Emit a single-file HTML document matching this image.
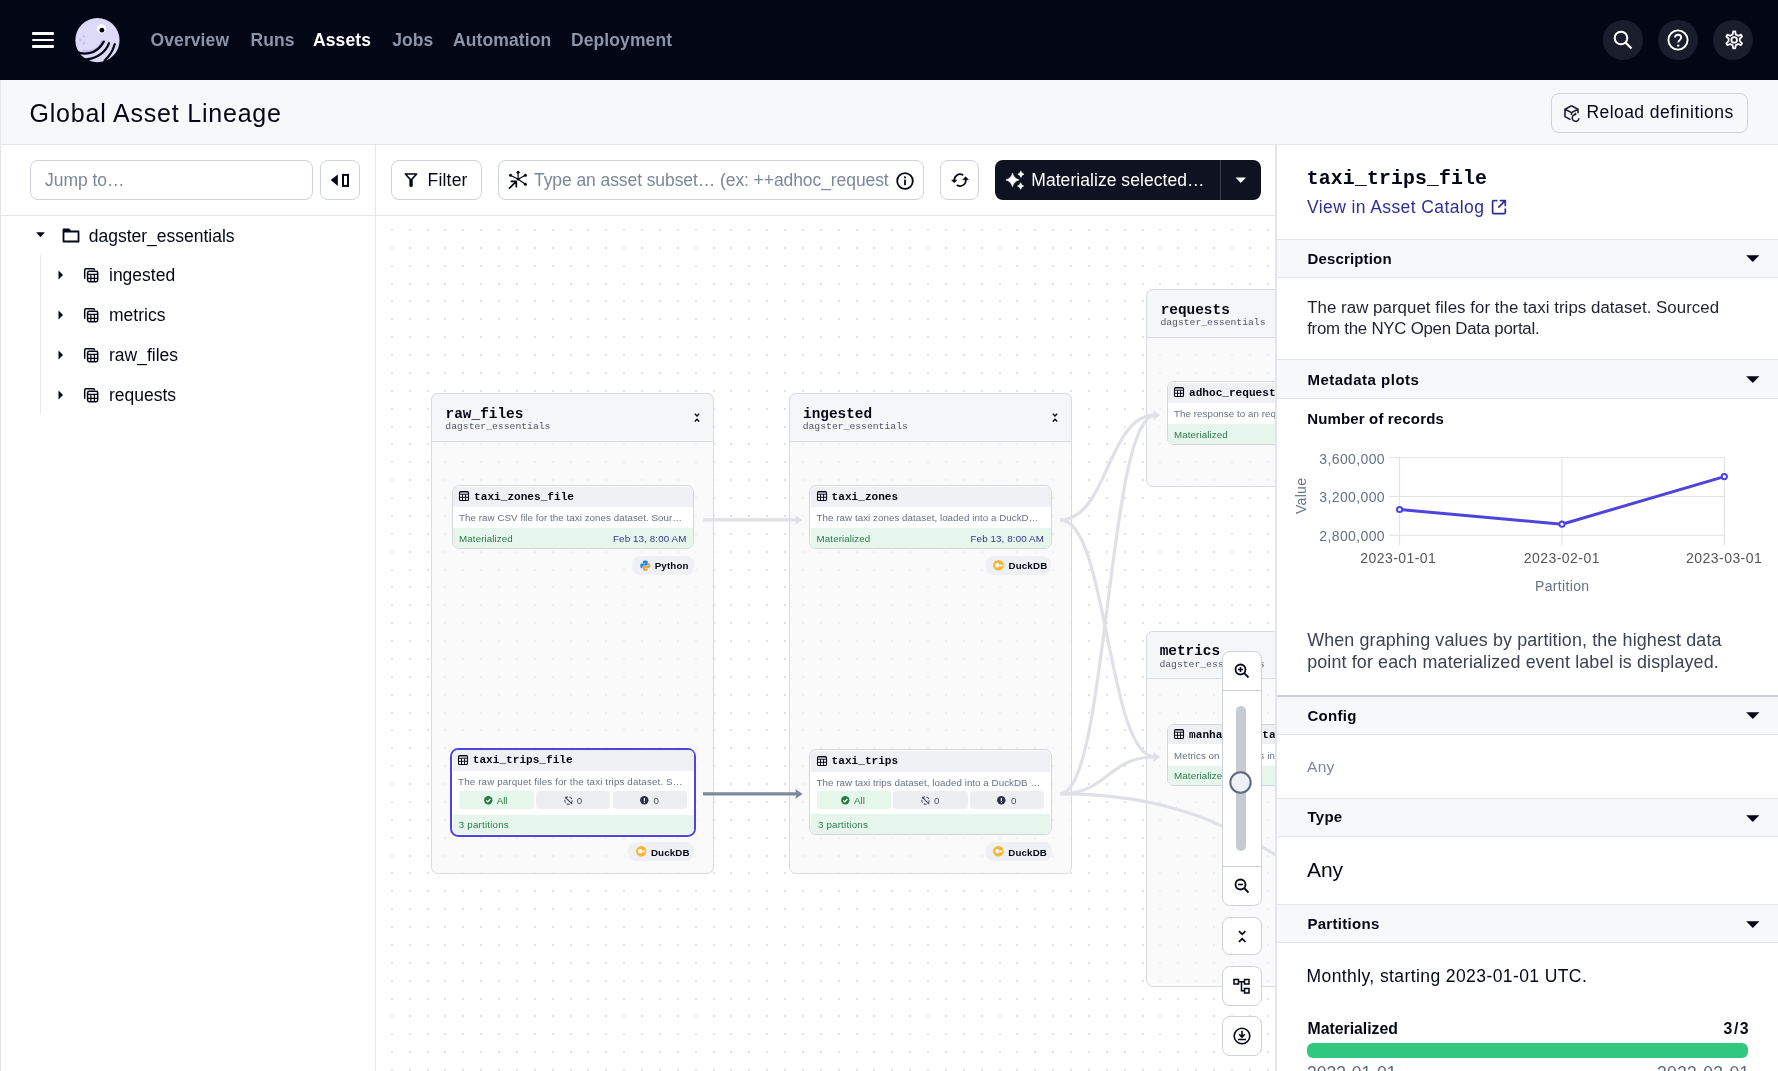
<!DOCTYPE html><html><head><meta charset="utf-8"><style>
*{box-sizing:border-box;margin:0;padding:0}
html,body{width:1778px;height:1071px;overflow:hidden;background:#fff;font-family:'Liberation Sans',sans-serif;color:#030615}
.a{position:absolute}
.t{position:absolute;white-space:nowrap;line-height:1}
svg{overflow:visible}
</style></head><body>
<div style="position:absolute;left:0;top:0;width:1778px;height:1071px;overflow:hidden;will-change:transform;background:#fff">
<div class="a" style="left:0px;top:0px;width:1778.00px;height:80.00px;background:#030615"></div>
<div class="a" style="left:31.8px;top:32.2px;width:22.60px;height:2.60px;background:#fff;border-radius:1px"></div>
<div class="a" style="left:31.8px;top:38.7px;width:22.60px;height:2.60px;background:#fff;border-radius:1px"></div>
<div class="a" style="left:31.8px;top:45.2px;width:22.60px;height:2.60px;background:#fff;border-radius:1px"></div>
<svg class="a" style="left:0px;top:0px;" width="130" height="80" viewBox="0 0 130 80">
<circle cx="97.45" cy="40.2" r="22.1" fill="#DCDAF8"/>
<path d="M84 51.5 C 92 52.5, 99 50, 102 42" stroke="#C5C0F2" stroke-width="3.2" fill="none" stroke-linecap="round"/>
<path d="M76 51.2 C 82 54.8, 96 56, 103.8 41.6" stroke="#030615" stroke-width="2.3" fill="none" stroke-linecap="round"/>
<path d="M87.5 59.2 C 97 58.3, 106 52, 109 43.2" stroke="#030615" stroke-width="2.2" fill="none" stroke-linecap="round"/>
<path d="M104.6 60.5 C 110 56, 113 50, 114.8 44.2" stroke="#030615" stroke-width="2.2" fill="none" stroke-linecap="round"/>
<path d="M70 53 L78.5 56 C 81 57.5, 84 58.3, 89 58.6 L 90.5 62.5 L 70 64 Z" fill="#030615"/>
<path d="M93 64 L 104.5 62 L 108 60 L 108 66 Z" fill="#030615"/>
<circle cx="101.4" cy="28.8" r="4.6" fill="#fff"/>
<circle cx="101.9" cy="30.2" r="2.4" fill="#030615"/>
<circle cx="83.9" cy="36.3" r="1.4" fill="#C5C0F2"/><circle cx="80.5" cy="40" r="1.4" fill="#C5C0F2"/><circle cx="83.9" cy="43.4" r="1.4" fill="#C5C0F2"/>
</svg>
<div class="t" style="left:150.50px;top:31.62px;font-size:17.5px;font-weight:700;color:#8D95A8;font-family:'Liberation Sans',sans-serif;letter-spacing:0.1px;">Overview</div>
<div class="t" style="left:250.50px;top:31.62px;font-size:17.5px;font-weight:700;color:#8D95A8;font-family:'Liberation Sans',sans-serif;letter-spacing:0.1px;">Runs</div>
<div class="t" style="left:313.00px;top:31.62px;font-size:17.5px;font-weight:700;color:#fff;font-family:'Liberation Sans',sans-serif;letter-spacing:0.1px;">Assets</div>
<div class="t" style="left:392.20px;top:31.62px;font-size:17.5px;font-weight:700;color:#8D95A8;font-family:'Liberation Sans',sans-serif;letter-spacing:0.1px;">Jobs</div>
<div class="t" style="left:453.00px;top:31.62px;font-size:17.5px;font-weight:700;color:#8D95A8;font-family:'Liberation Sans',sans-serif;letter-spacing:0.1px;">Automation</div>
<div class="t" style="left:571.00px;top:31.62px;font-size:17.5px;font-weight:700;color:#8D95A8;font-family:'Liberation Sans',sans-serif;letter-spacing:0.1px;">Deployment</div>
<div class="a" style="left:1603px;top:20px;width:40.00px;height:40.00px;background:#191D2C;border-radius:50%"></div>
<div class="a" style="left:1658px;top:20px;width:40.00px;height:40.00px;background:#191D2C;border-radius:50%"></div>
<div class="a" style="left:1713px;top:20px;width:40.00px;height:40.00px;background:#191D2C;border-radius:50%"></div>
<svg class="a" style="left:1610px;top:27px;" width="26" height="26" viewBox="0 0 26 26"><circle cx="11" cy="11" r="6.3" stroke="#fff" stroke-width="2" fill="none"/><path d="M15.5 15.5 L21.5 21.5" stroke="#fff" stroke-width="2.2"/></svg>
<svg class="a" style="left:1665px;top:27px;" width="26" height="26" viewBox="0 0 26 26"><circle cx="13" cy="13" r="9.6" stroke="#fff" stroke-width="1.9" fill="none"/><path d="M10 10.6 C10 6.8, 16.2 6.8, 16.2 10.6 C16.2 13, 13.2 13.2, 13.2 15.6" stroke="#fff" stroke-width="1.9" fill="none"/><circle cx="13.2" cy="18.6" r="1.2" fill="#fff"/></svg>
<svg class="a" style="left:1718.6px;top:26.4px;" width="28" height="28" viewBox="-1.2 -1.9 28 28"><path d="M13 3.5 L15 3.5 L15.6 6.6 L17.9 7.9 L20.8 6.8 L21.9 8.6 L19.6 10.7 L19.6 13.3 L21.9 15.4 L20.8 17.2 L17.9 16.1 L15.6 17.4 L15 20.5 L13 20.5 L12.4 17.4 L10.1 16.1 L7.2 17.2 L6.1 15.4 L8.4 13.3 L8.4 10.7 L6.1 8.6 L7.2 6.8 L10.1 7.9 L12.4 6.6 Z" stroke="#fff" stroke-width="1.8" fill="none" stroke-linejoin="round"/><circle cx="14" cy="12" r="2.8" stroke="#fff" stroke-width="1.8" fill="none"/></svg>
<div class="a" style="left:0px;top:80px;width:1778.00px;height:64.00px;background:#F7F8FA"></div>
<div class="a" style="left:0px;top:144px;width:1778.00px;height:1.00px;background:#E3E5EA"></div>
<div class="t" style="left:29.50px;top:100.75px;font-size:25px;font-weight:400;color:#030615;font-family:'Liberation Sans',sans-serif;letter-spacing:0.8px;">Global Asset Lineage</div>
<div class="a" style="left:1551px;top:93px;width:197.00px;height:39.50px;border:1px solid #CDD2DB;border-radius:8px"></div>
<svg class="a" style="left:1563px;top:104px;" width="18" height="19" viewBox="0 0 18 19"><path d="M8.5 1.8 L15 5.2 L15 9.2 M8.5 1.8 L2 5.2 L2 12.6 L7.5 15.6 M2 5.2 L8.5 8.6 L15 5.2 M8.5 8.6 L8.5 11" stroke="#1b1f2e" stroke-width="1.6" fill="none" stroke-linejoin="round"/><path d="M16 14.2 A3.4 3.4 0 1 1 13.2 10.6 L11.4 10.6 M13.2 10.6 L11.8 9" stroke="#1b1f2e" stroke-width="1.5" fill="none"/></svg>
<div class="t" style="left:1586.40px;top:104.03px;font-size:17.5px;font-weight:400;color:#030615;font-family:'Liberation Sans',sans-serif;letter-spacing:0.45px;">Reload definitions</div>
<div class="a" style="left:375px;top:145px;width:1.00px;height:926.00px;background:#E5E7EB"></div>
<div class="a" style="left:0px;top:215px;width:375.00px;height:1.00px;background:#E5E7EB"></div>
<div class="a" style="left:30px;top:160px;width:282.50px;height:40.00px;border:1px solid #CDD2DB;border-radius:8px;background:#fff"></div>
<div class="t" style="left:45.00px;top:172.22px;font-size:17.5px;font-weight:400;color:#7D879A;font-family:'Liberation Sans',sans-serif;letter-spacing:-0.05px;">Jump to…</div>
<div class="a" style="left:320px;top:160px;width:39.50px;height:40.00px;border:1px solid #CDD2DB;border-radius:8px;background:#fff"></div>
<svg class="a" style="left:330px;top:172px;" width="20" height="16" viewBox="0 0 20 16"><path d="M0.7 8.1 L7.8 2.4 L7.8 13.9 Z" fill="#030615"/><rect x="13" y="2.9" width="5" height="11" stroke="#030615" stroke-width="2" fill="none"/></svg>
<svg class="a" style="left:35.5px;top:232.4px;" width="10" height="6" viewBox="0 0 10 6"><path d="M0.2 0.2 L8.8 0.2 L4.5 5.3 Z" fill="#030615"/></svg>
<svg class="a" style="left:62px;top:228px;" width="18" height="15" viewBox="0 0 18 15"><path d="M1.5 3.5 L1.5 1.5 L7 1.5 L8.5 3.5 L16.5 3.5 L16.5 13.5 L1.5 13.5 Z M1.5 3.5 L16.5 3.5" stroke="#030615" stroke-width="1.8" fill="none" stroke-linejoin="round"/></svg>
<div class="t" style="left:88.70px;top:227.82px;font-size:17.5px;font-weight:400;color:#030615;font-family:'Liberation Sans',sans-serif;letter-spacing:0px;">dagster_essentials</div>
<div class="a" style="left:39.7px;top:255px;width:1.30px;height:159.00px;background:#E5E7EB"></div>
<svg class="a" style="left:57.5px;top:269.8px;" width="6" height="10" viewBox="0 0 6 10"><path d="M0.5 0.5 L5 5 L0.5 9.5 Z" fill="#030615"/></svg>
<svg class="a" style="left:80px;top:264px;" width="22" height="22" viewBox="0 0 22 22"><path d="M4.7 14.2 L4.7 6.2 Q4.7 4.7 6.2 4.7 L13 4.7 Q14.2 4.7 14.5 5.6" stroke="#030615" stroke-width="1.5" fill="none" stroke-linecap="round"/><rect x="7.6" y="7.2" width="10.1" height="10.5" rx="1.6" stroke="#030615" stroke-width="1.5" fill="none"/><path d="M7.6 10.3 L17.7 10.3 M7.6 14.3 L17.7 14.3 M10.9 10.3 L10.9 17.7 M14.4 10.3 L14.4 17.7" stroke="#030615" stroke-width="1.3"/></svg>
<div class="t" style="left:109.00px;top:267.32px;font-size:17.5px;font-weight:400;color:#030615;font-family:'Liberation Sans',sans-serif;letter-spacing:0px;">ingested</div>
<svg class="a" style="left:57.5px;top:309.8px;" width="6" height="10" viewBox="0 0 6 10"><path d="M0.5 0.5 L5 5 L0.5 9.5 Z" fill="#030615"/></svg>
<svg class="a" style="left:80px;top:304px;" width="22" height="22" viewBox="0 0 22 22"><path d="M4.7 14.2 L4.7 6.2 Q4.7 4.7 6.2 4.7 L13 4.7 Q14.2 4.7 14.5 5.6" stroke="#030615" stroke-width="1.5" fill="none" stroke-linecap="round"/><rect x="7.6" y="7.2" width="10.1" height="10.5" rx="1.6" stroke="#030615" stroke-width="1.5" fill="none"/><path d="M7.6 10.3 L17.7 10.3 M7.6 14.3 L17.7 14.3 M10.9 10.3 L10.9 17.7 M14.4 10.3 L14.4 17.7" stroke="#030615" stroke-width="1.3"/></svg>
<div class="t" style="left:109.00px;top:307.32px;font-size:17.5px;font-weight:400;color:#030615;font-family:'Liberation Sans',sans-serif;letter-spacing:0px;">metrics</div>
<svg class="a" style="left:57.5px;top:349.8px;" width="6" height="10" viewBox="0 0 6 10"><path d="M0.5 0.5 L5 5 L0.5 9.5 Z" fill="#030615"/></svg>
<svg class="a" style="left:80px;top:344px;" width="22" height="22" viewBox="0 0 22 22"><path d="M4.7 14.2 L4.7 6.2 Q4.7 4.7 6.2 4.7 L13 4.7 Q14.2 4.7 14.5 5.6" stroke="#030615" stroke-width="1.5" fill="none" stroke-linecap="round"/><rect x="7.6" y="7.2" width="10.1" height="10.5" rx="1.6" stroke="#030615" stroke-width="1.5" fill="none"/><path d="M7.6 10.3 L17.7 10.3 M7.6 14.3 L17.7 14.3 M10.9 10.3 L10.9 17.7 M14.4 10.3 L14.4 17.7" stroke="#030615" stroke-width="1.3"/></svg>
<div class="t" style="left:109.00px;top:347.32px;font-size:17.5px;font-weight:400;color:#030615;font-family:'Liberation Sans',sans-serif;letter-spacing:0px;">raw_files</div>
<svg class="a" style="left:57.5px;top:389.8px;" width="6" height="10" viewBox="0 0 6 10"><path d="M0.5 0.5 L5 5 L0.5 9.5 Z" fill="#030615"/></svg>
<svg class="a" style="left:80px;top:384px;" width="22" height="22" viewBox="0 0 22 22"><path d="M4.7 14.2 L4.7 6.2 Q4.7 4.7 6.2 4.7 L13 4.7 Q14.2 4.7 14.5 5.6" stroke="#030615" stroke-width="1.5" fill="none" stroke-linecap="round"/><rect x="7.6" y="7.2" width="10.1" height="10.5" rx="1.6" stroke="#030615" stroke-width="1.5" fill="none"/><path d="M7.6 10.3 L17.7 10.3 M7.6 14.3 L17.7 14.3 M10.9 10.3 L10.9 17.7 M14.4 10.3 L14.4 17.7" stroke="#030615" stroke-width="1.3"/></svg>
<div class="t" style="left:109.00px;top:387.32px;font-size:17.5px;font-weight:400;color:#030615;font-family:'Liberation Sans',sans-serif;letter-spacing:0px;">requests</div>
<div class="a" style="left:376px;top:215px;width:899.00px;height:1.00px;background:#E5E7EB"></div>
<div class="a" style="left:391.4px;top:160px;width:90.90px;height:40.00px;border:1px solid #CDD2DB;border-radius:8px;background:#fff"></div>
<svg class="a" style="left:398px;top:166px;" width="28" height="28" viewBox="0 0 28 28"><path d="M7.4 8.0 L18.6 8.0 L13 14.3 Z" stroke="#030615" stroke-width="1.7" fill="none" stroke-linejoin="round"/><path d="M13.05 14.6 L13.05 19.4" stroke="#030615" stroke-width="3.3" stroke-linecap="round"/></svg>
<div class="t" style="left:427.50px;top:171.62px;font-size:17.5px;font-weight:400;color:#030615;font-family:'Liberation Sans',sans-serif;letter-spacing:0.2px;">Filter</div>
<div class="a" style="left:498.4px;top:160px;width:425.90px;height:40.00px;border:1px solid #CDD2DB;border-radius:8px;background:#fff;overflow:hidden"></div>
<svg class="a" style="left:504px;top:166px;" width="28" height="28" viewBox="0 0 28 28"><g stroke="#030615" fill="#030615"><path d="M14.1 13.3 L14.1 6.3 M14.1 13.3 L6.5 9.2 M14.1 13.3 L21.4 9.2 M14.1 13.3 L21.4 18.3" stroke-width="1.2" fill="none"/><circle cx="14.1" cy="6.3" r="1.5" stroke="none"/><circle cx="6.5" cy="9.2" r="1.5" stroke="none"/><circle cx="21.4" cy="9.2" r="1.5" stroke="none"/><circle cx="21.4" cy="18.3" r="1.5" stroke="none"/><circle cx="14.1" cy="13.3" r="1.2" stroke="none"/><path d="M5.5 22.2 L12.3 15.4 M7.3 15.4 L12.3 15.4 L12.3 20.7" stroke-width="1.7" fill="none" stroke-linecap="round" stroke-linejoin="round"/></g></svg>
<div class="a" style="left:534px;top:165px;width:355px;height:30px;overflow:hidden"><div class="t" style="left:0.00px;top:6.82px;font-size:17.5px;font-weight:400;color:#7D879A;font-family:'Liberation Sans',sans-serif;letter-spacing:-0.08px;">Type an asset subset… (ex: ++adhoc_request)</div>
</div>
<svg class="a" style="left:896px;top:171.5px;" width="18" height="18" viewBox="0 0 18 18"><circle cx="9" cy="9" r="7.8" stroke="#030615" stroke-width="1.8" fill="none"/><rect x="8.1" y="7.6" width="1.8" height="5.6" fill="#030615"/><circle cx="9" cy="5.3" r="1.1" fill="#030615"/></svg>
<div class="a" style="left:940.3px;top:160px;width:39.20px;height:40.00px;border:1px solid #CDD2DB;border-radius:8px;background:#fff"></div>
<svg class="a" style="left:946px;top:166px;" width="28" height="28" viewBox="0 0 28 28"><path d="M16.6 8.8 A5.75 5.75 0 0 0 8.35 14.3 M11.3 19.3 A5.75 5.75 0 0 0 19.85 13.9" stroke="#030615" stroke-width="1.7" fill="none" stroke-linecap="round"/><path d="M5.6 14 L10.8 14 L8.2 16.8 Z M16.8 13.7 L22.4 13.7 L19.6 10.7 Z" fill="#030615" stroke="#030615" stroke-width="0.6" stroke-linejoin="round"/></svg>
<div class="a" style="left:995.1px;top:160px;width:265.80px;height:40.00px;background:#0F1220;border-radius:8px"></div>
<div class="a" style="left:1220px;top:160px;width:1.00px;height:40.00px;background:#3A3D4C"></div>
<svg class="a" style="left:1001px;top:166px;" width="28" height="28" viewBox="0 0 28 28"><path d="M11.5 7.0 Q12.82 12.52 18.1 13.9 Q12.82 15.280000000000001 11.5 20.8 Q10.18 15.280000000000001 4.9 13.9 Q10.18 12.52 11.5 7.0 Z M19.9 4.8999999999999995 Q20.52 7.539999999999999 23.0 8.2 Q20.52 8.86 19.9 11.5 Q19.279999999999998 8.86 16.799999999999997 8.2 Q19.279999999999998 7.539999999999999 19.9 4.8999999999999995 Z M19.6 16.7 Q20.220000000000002 19.34 22.700000000000003 20.0 Q20.220000000000002 20.66 19.6 23.3 Q18.98 20.66 16.5 20.0 Q18.98 19.34 19.6 16.7 Z" fill="#fff" stroke="#fff" stroke-width="0.6" stroke-linejoin="round"/></svg>
<div class="t" style="left:1031.30px;top:172.22px;font-size:17.5px;font-weight:400;color:#fff;font-family:'Liberation Sans',sans-serif;letter-spacing:0.05px;">Materialize selected…</div>
<svg class="a" style="left:1235px;top:177px;" width="12" height="7" viewBox="0 0 12 7"><path d="M0.5 0.5 L11 0.5 L5.75 6 Z" fill="#fff"/></svg>
<div class="a" style="left:376px;top:216px;width:898.5px;height:855px;overflow:hidden">
<svg class="a" style="left:0px;top:0px;" width="900" height="860" viewBox="0 0 900 860"><path d="M15 13h2v2h-2zM33 13h2v2h-2zM51 13h2v2h-2zM68 13h2v2h-2zM86 13h2v2h-2zM104 13h2v2h-2zM122 13h2v2h-2zM140 13h2v2h-2zM158 13h2v2h-2zM176 13h2v2h-2zM194 13h2v2h-2zM211 13h2v2h-2zM229 13h2v2h-2zM247 13h2v2h-2zM265 13h2v2h-2zM283 13h2v2h-2zM301 13h2v2h-2zM319 13h2v2h-2zM337 13h2v2h-2zM354 13h2v2h-2zM372 13h2v2h-2zM390 13h2v2h-2zM408 13h2v2h-2zM426 13h2v2h-2zM444 13h2v2h-2zM462 13h2v2h-2zM480 13h2v2h-2zM497 13h2v2h-2zM515 13h2v2h-2zM533 13h2v2h-2zM551 13h2v2h-2zM569 13h2v2h-2zM587 13h2v2h-2zM605 13h2v2h-2zM623 13h2v2h-2zM640 13h2v2h-2zM658 13h2v2h-2zM676 13h2v2h-2zM694 13h2v2h-2zM712 13h2v2h-2zM730 13h2v2h-2zM748 13h2v2h-2zM766 13h2v2h-2zM783 13h2v2h-2zM801 13h2v2h-2zM819 13h2v2h-2zM837 13h2v2h-2zM855 13h2v2h-2zM873 13h2v2h-2zM891 13h2v2h-2zM15 31h2v2h-2zM33 31h2v2h-2zM51 31h2v2h-2zM68 31h2v2h-2zM86 31h2v2h-2zM104 31h2v2h-2zM122 31h2v2h-2zM140 31h2v2h-2zM158 31h2v2h-2zM176 31h2v2h-2zM194 31h2v2h-2zM211 31h2v2h-2zM229 31h2v2h-2zM247 31h2v2h-2zM265 31h2v2h-2zM283 31h2v2h-2zM301 31h2v2h-2zM319 31h2v2h-2zM337 31h2v2h-2zM354 31h2v2h-2zM372 31h2v2h-2zM390 31h2v2h-2zM408 31h2v2h-2zM426 31h2v2h-2zM444 31h2v2h-2zM462 31h2v2h-2zM480 31h2v2h-2zM497 31h2v2h-2zM515 31h2v2h-2zM533 31h2v2h-2zM551 31h2v2h-2zM569 31h2v2h-2zM587 31h2v2h-2zM605 31h2v2h-2zM623 31h2v2h-2zM640 31h2v2h-2zM658 31h2v2h-2zM676 31h2v2h-2zM694 31h2v2h-2zM712 31h2v2h-2zM730 31h2v2h-2zM748 31h2v2h-2zM766 31h2v2h-2zM783 31h2v2h-2zM801 31h2v2h-2zM819 31h2v2h-2zM837 31h2v2h-2zM855 31h2v2h-2zM873 31h2v2h-2zM891 31h2v2h-2zM15 49h2v2h-2zM33 49h2v2h-2zM51 49h2v2h-2zM68 49h2v2h-2zM86 49h2v2h-2zM104 49h2v2h-2zM122 49h2v2h-2zM140 49h2v2h-2zM158 49h2v2h-2zM176 49h2v2h-2zM194 49h2v2h-2zM211 49h2v2h-2zM229 49h2v2h-2zM247 49h2v2h-2zM265 49h2v2h-2zM283 49h2v2h-2zM301 49h2v2h-2zM319 49h2v2h-2zM337 49h2v2h-2zM354 49h2v2h-2zM372 49h2v2h-2zM390 49h2v2h-2zM408 49h2v2h-2zM426 49h2v2h-2zM444 49h2v2h-2zM462 49h2v2h-2zM480 49h2v2h-2zM497 49h2v2h-2zM515 49h2v2h-2zM533 49h2v2h-2zM551 49h2v2h-2zM569 49h2v2h-2zM587 49h2v2h-2zM605 49h2v2h-2zM623 49h2v2h-2zM640 49h2v2h-2zM658 49h2v2h-2zM676 49h2v2h-2zM694 49h2v2h-2zM712 49h2v2h-2zM730 49h2v2h-2zM748 49h2v2h-2zM766 49h2v2h-2zM783 49h2v2h-2zM801 49h2v2h-2zM819 49h2v2h-2zM837 49h2v2h-2zM855 49h2v2h-2zM873 49h2v2h-2zM891 49h2v2h-2zM15 67h2v2h-2zM33 67h2v2h-2zM51 67h2v2h-2zM68 67h2v2h-2zM86 67h2v2h-2zM104 67h2v2h-2zM122 67h2v2h-2zM140 67h2v2h-2zM158 67h2v2h-2zM176 67h2v2h-2zM194 67h2v2h-2zM211 67h2v2h-2zM229 67h2v2h-2zM247 67h2v2h-2zM265 67h2v2h-2zM283 67h2v2h-2zM301 67h2v2h-2zM319 67h2v2h-2zM337 67h2v2h-2zM354 67h2v2h-2zM372 67h2v2h-2zM390 67h2v2h-2zM408 67h2v2h-2zM426 67h2v2h-2zM444 67h2v2h-2zM462 67h2v2h-2zM480 67h2v2h-2zM497 67h2v2h-2zM515 67h2v2h-2zM533 67h2v2h-2zM551 67h2v2h-2zM569 67h2v2h-2zM587 67h2v2h-2zM605 67h2v2h-2zM623 67h2v2h-2zM640 67h2v2h-2zM658 67h2v2h-2zM676 67h2v2h-2zM694 67h2v2h-2zM712 67h2v2h-2zM730 67h2v2h-2zM748 67h2v2h-2zM766 67h2v2h-2zM783 67h2v2h-2zM801 67h2v2h-2zM819 67h2v2h-2zM837 67h2v2h-2zM855 67h2v2h-2zM873 67h2v2h-2zM891 67h2v2h-2zM15 84h2v2h-2zM33 84h2v2h-2zM51 84h2v2h-2zM68 84h2v2h-2zM86 84h2v2h-2zM104 84h2v2h-2zM122 84h2v2h-2zM140 84h2v2h-2zM158 84h2v2h-2zM176 84h2v2h-2zM194 84h2v2h-2zM211 84h2v2h-2zM229 84h2v2h-2zM247 84h2v2h-2zM265 84h2v2h-2zM283 84h2v2h-2zM301 84h2v2h-2zM319 84h2v2h-2zM337 84h2v2h-2zM354 84h2v2h-2zM372 84h2v2h-2zM390 84h2v2h-2zM408 84h2v2h-2zM426 84h2v2h-2zM444 84h2v2h-2zM462 84h2v2h-2zM480 84h2v2h-2zM497 84h2v2h-2zM515 84h2v2h-2zM533 84h2v2h-2zM551 84h2v2h-2zM569 84h2v2h-2zM587 84h2v2h-2zM605 84h2v2h-2zM623 84h2v2h-2zM640 84h2v2h-2zM658 84h2v2h-2zM676 84h2v2h-2zM694 84h2v2h-2zM712 84h2v2h-2zM730 84h2v2h-2zM748 84h2v2h-2zM766 84h2v2h-2zM783 84h2v2h-2zM801 84h2v2h-2zM819 84h2v2h-2zM837 84h2v2h-2zM855 84h2v2h-2zM873 84h2v2h-2zM891 84h2v2h-2zM15 102h2v2h-2zM33 102h2v2h-2zM51 102h2v2h-2zM68 102h2v2h-2zM86 102h2v2h-2zM104 102h2v2h-2zM122 102h2v2h-2zM140 102h2v2h-2zM158 102h2v2h-2zM176 102h2v2h-2zM194 102h2v2h-2zM211 102h2v2h-2zM229 102h2v2h-2zM247 102h2v2h-2zM265 102h2v2h-2zM283 102h2v2h-2zM301 102h2v2h-2zM319 102h2v2h-2zM337 102h2v2h-2zM354 102h2v2h-2zM372 102h2v2h-2zM390 102h2v2h-2zM408 102h2v2h-2zM426 102h2v2h-2zM444 102h2v2h-2zM462 102h2v2h-2zM480 102h2v2h-2zM497 102h2v2h-2zM515 102h2v2h-2zM533 102h2v2h-2zM551 102h2v2h-2zM569 102h2v2h-2zM587 102h2v2h-2zM605 102h2v2h-2zM623 102h2v2h-2zM640 102h2v2h-2zM658 102h2v2h-2zM676 102h2v2h-2zM694 102h2v2h-2zM712 102h2v2h-2zM730 102h2v2h-2zM748 102h2v2h-2zM766 102h2v2h-2zM783 102h2v2h-2zM801 102h2v2h-2zM819 102h2v2h-2zM837 102h2v2h-2zM855 102h2v2h-2zM873 102h2v2h-2zM891 102h2v2h-2zM15 120h2v2h-2zM33 120h2v2h-2zM51 120h2v2h-2zM68 120h2v2h-2zM86 120h2v2h-2zM104 120h2v2h-2zM122 120h2v2h-2zM140 120h2v2h-2zM158 120h2v2h-2zM176 120h2v2h-2zM194 120h2v2h-2zM211 120h2v2h-2zM229 120h2v2h-2zM247 120h2v2h-2zM265 120h2v2h-2zM283 120h2v2h-2zM301 120h2v2h-2zM319 120h2v2h-2zM337 120h2v2h-2zM354 120h2v2h-2zM372 120h2v2h-2zM390 120h2v2h-2zM408 120h2v2h-2zM426 120h2v2h-2zM444 120h2v2h-2zM462 120h2v2h-2zM480 120h2v2h-2zM497 120h2v2h-2zM515 120h2v2h-2zM533 120h2v2h-2zM551 120h2v2h-2zM569 120h2v2h-2zM587 120h2v2h-2zM605 120h2v2h-2zM623 120h2v2h-2zM640 120h2v2h-2zM658 120h2v2h-2zM676 120h2v2h-2zM694 120h2v2h-2zM712 120h2v2h-2zM730 120h2v2h-2zM748 120h2v2h-2zM766 120h2v2h-2zM783 120h2v2h-2zM801 120h2v2h-2zM819 120h2v2h-2zM837 120h2v2h-2zM855 120h2v2h-2zM873 120h2v2h-2zM891 120h2v2h-2zM15 138h2v2h-2zM33 138h2v2h-2zM51 138h2v2h-2zM68 138h2v2h-2zM86 138h2v2h-2zM104 138h2v2h-2zM122 138h2v2h-2zM140 138h2v2h-2zM158 138h2v2h-2zM176 138h2v2h-2zM194 138h2v2h-2zM211 138h2v2h-2zM229 138h2v2h-2zM247 138h2v2h-2zM265 138h2v2h-2zM283 138h2v2h-2zM301 138h2v2h-2zM319 138h2v2h-2zM337 138h2v2h-2zM354 138h2v2h-2zM372 138h2v2h-2zM390 138h2v2h-2zM408 138h2v2h-2zM426 138h2v2h-2zM444 138h2v2h-2zM462 138h2v2h-2zM480 138h2v2h-2zM497 138h2v2h-2zM515 138h2v2h-2zM533 138h2v2h-2zM551 138h2v2h-2zM569 138h2v2h-2zM587 138h2v2h-2zM605 138h2v2h-2zM623 138h2v2h-2zM640 138h2v2h-2zM658 138h2v2h-2zM676 138h2v2h-2zM694 138h2v2h-2zM712 138h2v2h-2zM730 138h2v2h-2zM748 138h2v2h-2zM766 138h2v2h-2zM783 138h2v2h-2zM801 138h2v2h-2zM819 138h2v2h-2zM837 138h2v2h-2zM855 138h2v2h-2zM873 138h2v2h-2zM891 138h2v2h-2zM15 156h2v2h-2zM33 156h2v2h-2zM51 156h2v2h-2zM68 156h2v2h-2zM86 156h2v2h-2zM104 156h2v2h-2zM122 156h2v2h-2zM140 156h2v2h-2zM158 156h2v2h-2zM176 156h2v2h-2zM194 156h2v2h-2zM211 156h2v2h-2zM229 156h2v2h-2zM247 156h2v2h-2zM265 156h2v2h-2zM283 156h2v2h-2zM301 156h2v2h-2zM319 156h2v2h-2zM337 156h2v2h-2zM354 156h2v2h-2zM372 156h2v2h-2zM390 156h2v2h-2zM408 156h2v2h-2zM426 156h2v2h-2zM444 156h2v2h-2zM462 156h2v2h-2zM480 156h2v2h-2zM497 156h2v2h-2zM515 156h2v2h-2zM533 156h2v2h-2zM551 156h2v2h-2zM569 156h2v2h-2zM587 156h2v2h-2zM605 156h2v2h-2zM623 156h2v2h-2zM640 156h2v2h-2zM658 156h2v2h-2zM676 156h2v2h-2zM694 156h2v2h-2zM712 156h2v2h-2zM730 156h2v2h-2zM748 156h2v2h-2zM766 156h2v2h-2zM783 156h2v2h-2zM801 156h2v2h-2zM819 156h2v2h-2zM837 156h2v2h-2zM855 156h2v2h-2zM873 156h2v2h-2zM891 156h2v2h-2zM15 174h2v2h-2zM33 174h2v2h-2zM51 174h2v2h-2zM68 174h2v2h-2zM86 174h2v2h-2zM104 174h2v2h-2zM122 174h2v2h-2zM140 174h2v2h-2zM158 174h2v2h-2zM176 174h2v2h-2zM194 174h2v2h-2zM211 174h2v2h-2zM229 174h2v2h-2zM247 174h2v2h-2zM265 174h2v2h-2zM283 174h2v2h-2zM301 174h2v2h-2zM319 174h2v2h-2zM337 174h2v2h-2zM354 174h2v2h-2zM372 174h2v2h-2zM390 174h2v2h-2zM408 174h2v2h-2zM426 174h2v2h-2zM444 174h2v2h-2zM462 174h2v2h-2zM480 174h2v2h-2zM497 174h2v2h-2zM515 174h2v2h-2zM533 174h2v2h-2zM551 174h2v2h-2zM569 174h2v2h-2zM587 174h2v2h-2zM605 174h2v2h-2zM623 174h2v2h-2zM640 174h2v2h-2zM658 174h2v2h-2zM676 174h2v2h-2zM694 174h2v2h-2zM712 174h2v2h-2zM730 174h2v2h-2zM748 174h2v2h-2zM766 174h2v2h-2zM783 174h2v2h-2zM801 174h2v2h-2zM819 174h2v2h-2zM837 174h2v2h-2zM855 174h2v2h-2zM873 174h2v2h-2zM891 174h2v2h-2zM15 192h2v2h-2zM33 192h2v2h-2zM51 192h2v2h-2zM68 192h2v2h-2zM86 192h2v2h-2zM104 192h2v2h-2zM122 192h2v2h-2zM140 192h2v2h-2zM158 192h2v2h-2zM176 192h2v2h-2zM194 192h2v2h-2zM211 192h2v2h-2zM229 192h2v2h-2zM247 192h2v2h-2zM265 192h2v2h-2zM283 192h2v2h-2zM301 192h2v2h-2zM319 192h2v2h-2zM337 192h2v2h-2zM354 192h2v2h-2zM372 192h2v2h-2zM390 192h2v2h-2zM408 192h2v2h-2zM426 192h2v2h-2zM444 192h2v2h-2zM462 192h2v2h-2zM480 192h2v2h-2zM497 192h2v2h-2zM515 192h2v2h-2zM533 192h2v2h-2zM551 192h2v2h-2zM569 192h2v2h-2zM587 192h2v2h-2zM605 192h2v2h-2zM623 192h2v2h-2zM640 192h2v2h-2zM658 192h2v2h-2zM676 192h2v2h-2zM694 192h2v2h-2zM712 192h2v2h-2zM730 192h2v2h-2zM748 192h2v2h-2zM766 192h2v2h-2zM783 192h2v2h-2zM801 192h2v2h-2zM819 192h2v2h-2zM837 192h2v2h-2zM855 192h2v2h-2zM873 192h2v2h-2zM891 192h2v2h-2zM15 210h2v2h-2zM33 210h2v2h-2zM51 210h2v2h-2zM68 210h2v2h-2zM86 210h2v2h-2zM104 210h2v2h-2zM122 210h2v2h-2zM140 210h2v2h-2zM158 210h2v2h-2zM176 210h2v2h-2zM194 210h2v2h-2zM211 210h2v2h-2zM229 210h2v2h-2zM247 210h2v2h-2zM265 210h2v2h-2zM283 210h2v2h-2zM301 210h2v2h-2zM319 210h2v2h-2zM337 210h2v2h-2zM354 210h2v2h-2zM372 210h2v2h-2zM390 210h2v2h-2zM408 210h2v2h-2zM426 210h2v2h-2zM444 210h2v2h-2zM462 210h2v2h-2zM480 210h2v2h-2zM497 210h2v2h-2zM515 210h2v2h-2zM533 210h2v2h-2zM551 210h2v2h-2zM569 210h2v2h-2zM587 210h2v2h-2zM605 210h2v2h-2zM623 210h2v2h-2zM640 210h2v2h-2zM658 210h2v2h-2zM676 210h2v2h-2zM694 210h2v2h-2zM712 210h2v2h-2zM730 210h2v2h-2zM748 210h2v2h-2zM766 210h2v2h-2zM783 210h2v2h-2zM801 210h2v2h-2zM819 210h2v2h-2zM837 210h2v2h-2zM855 210h2v2h-2zM873 210h2v2h-2zM891 210h2v2h-2zM15 227h2v2h-2zM33 227h2v2h-2zM51 227h2v2h-2zM68 227h2v2h-2zM86 227h2v2h-2zM104 227h2v2h-2zM122 227h2v2h-2zM140 227h2v2h-2zM158 227h2v2h-2zM176 227h2v2h-2zM194 227h2v2h-2zM211 227h2v2h-2zM229 227h2v2h-2zM247 227h2v2h-2zM265 227h2v2h-2zM283 227h2v2h-2zM301 227h2v2h-2zM319 227h2v2h-2zM337 227h2v2h-2zM354 227h2v2h-2zM372 227h2v2h-2zM390 227h2v2h-2zM408 227h2v2h-2zM426 227h2v2h-2zM444 227h2v2h-2zM462 227h2v2h-2zM480 227h2v2h-2zM497 227h2v2h-2zM515 227h2v2h-2zM533 227h2v2h-2zM551 227h2v2h-2zM569 227h2v2h-2zM587 227h2v2h-2zM605 227h2v2h-2zM623 227h2v2h-2zM640 227h2v2h-2zM658 227h2v2h-2zM676 227h2v2h-2zM694 227h2v2h-2zM712 227h2v2h-2zM730 227h2v2h-2zM748 227h2v2h-2zM766 227h2v2h-2zM783 227h2v2h-2zM801 227h2v2h-2zM819 227h2v2h-2zM837 227h2v2h-2zM855 227h2v2h-2zM873 227h2v2h-2zM891 227h2v2h-2zM15 245h2v2h-2zM33 245h2v2h-2zM51 245h2v2h-2zM68 245h2v2h-2zM86 245h2v2h-2zM104 245h2v2h-2zM122 245h2v2h-2zM140 245h2v2h-2zM158 245h2v2h-2zM176 245h2v2h-2zM194 245h2v2h-2zM211 245h2v2h-2zM229 245h2v2h-2zM247 245h2v2h-2zM265 245h2v2h-2zM283 245h2v2h-2zM301 245h2v2h-2zM319 245h2v2h-2zM337 245h2v2h-2zM354 245h2v2h-2zM372 245h2v2h-2zM390 245h2v2h-2zM408 245h2v2h-2zM426 245h2v2h-2zM444 245h2v2h-2zM462 245h2v2h-2zM480 245h2v2h-2zM497 245h2v2h-2zM515 245h2v2h-2zM533 245h2v2h-2zM551 245h2v2h-2zM569 245h2v2h-2zM587 245h2v2h-2zM605 245h2v2h-2zM623 245h2v2h-2zM640 245h2v2h-2zM658 245h2v2h-2zM676 245h2v2h-2zM694 245h2v2h-2zM712 245h2v2h-2zM730 245h2v2h-2zM748 245h2v2h-2zM766 245h2v2h-2zM783 245h2v2h-2zM801 245h2v2h-2zM819 245h2v2h-2zM837 245h2v2h-2zM855 245h2v2h-2zM873 245h2v2h-2zM891 245h2v2h-2zM15 263h2v2h-2zM33 263h2v2h-2zM51 263h2v2h-2zM68 263h2v2h-2zM86 263h2v2h-2zM104 263h2v2h-2zM122 263h2v2h-2zM140 263h2v2h-2zM158 263h2v2h-2zM176 263h2v2h-2zM194 263h2v2h-2zM211 263h2v2h-2zM229 263h2v2h-2zM247 263h2v2h-2zM265 263h2v2h-2zM283 263h2v2h-2zM301 263h2v2h-2zM319 263h2v2h-2zM337 263h2v2h-2zM354 263h2v2h-2zM372 263h2v2h-2zM390 263h2v2h-2zM408 263h2v2h-2zM426 263h2v2h-2zM444 263h2v2h-2zM462 263h2v2h-2zM480 263h2v2h-2zM497 263h2v2h-2zM515 263h2v2h-2zM533 263h2v2h-2zM551 263h2v2h-2zM569 263h2v2h-2zM587 263h2v2h-2zM605 263h2v2h-2zM623 263h2v2h-2zM640 263h2v2h-2zM658 263h2v2h-2zM676 263h2v2h-2zM694 263h2v2h-2zM712 263h2v2h-2zM730 263h2v2h-2zM748 263h2v2h-2zM766 263h2v2h-2zM783 263h2v2h-2zM801 263h2v2h-2zM819 263h2v2h-2zM837 263h2v2h-2zM855 263h2v2h-2zM873 263h2v2h-2zM891 263h2v2h-2zM15 281h2v2h-2zM33 281h2v2h-2zM51 281h2v2h-2zM68 281h2v2h-2zM86 281h2v2h-2zM104 281h2v2h-2zM122 281h2v2h-2zM140 281h2v2h-2zM158 281h2v2h-2zM176 281h2v2h-2zM194 281h2v2h-2zM211 281h2v2h-2zM229 281h2v2h-2zM247 281h2v2h-2zM265 281h2v2h-2zM283 281h2v2h-2zM301 281h2v2h-2zM319 281h2v2h-2zM337 281h2v2h-2zM354 281h2v2h-2zM372 281h2v2h-2zM390 281h2v2h-2zM408 281h2v2h-2zM426 281h2v2h-2zM444 281h2v2h-2zM462 281h2v2h-2zM480 281h2v2h-2zM497 281h2v2h-2zM515 281h2v2h-2zM533 281h2v2h-2zM551 281h2v2h-2zM569 281h2v2h-2zM587 281h2v2h-2zM605 281h2v2h-2zM623 281h2v2h-2zM640 281h2v2h-2zM658 281h2v2h-2zM676 281h2v2h-2zM694 281h2v2h-2zM712 281h2v2h-2zM730 281h2v2h-2zM748 281h2v2h-2zM766 281h2v2h-2zM783 281h2v2h-2zM801 281h2v2h-2zM819 281h2v2h-2zM837 281h2v2h-2zM855 281h2v2h-2zM873 281h2v2h-2zM891 281h2v2h-2zM15 299h2v2h-2zM33 299h2v2h-2zM51 299h2v2h-2zM68 299h2v2h-2zM86 299h2v2h-2zM104 299h2v2h-2zM122 299h2v2h-2zM140 299h2v2h-2zM158 299h2v2h-2zM176 299h2v2h-2zM194 299h2v2h-2zM211 299h2v2h-2zM229 299h2v2h-2zM247 299h2v2h-2zM265 299h2v2h-2zM283 299h2v2h-2zM301 299h2v2h-2zM319 299h2v2h-2zM337 299h2v2h-2zM354 299h2v2h-2zM372 299h2v2h-2zM390 299h2v2h-2zM408 299h2v2h-2zM426 299h2v2h-2zM444 299h2v2h-2zM462 299h2v2h-2zM480 299h2v2h-2zM497 299h2v2h-2zM515 299h2v2h-2zM533 299h2v2h-2zM551 299h2v2h-2zM569 299h2v2h-2zM587 299h2v2h-2zM605 299h2v2h-2zM623 299h2v2h-2zM640 299h2v2h-2zM658 299h2v2h-2zM676 299h2v2h-2zM694 299h2v2h-2zM712 299h2v2h-2zM730 299h2v2h-2zM748 299h2v2h-2zM766 299h2v2h-2zM783 299h2v2h-2zM801 299h2v2h-2zM819 299h2v2h-2zM837 299h2v2h-2zM855 299h2v2h-2zM873 299h2v2h-2zM891 299h2v2h-2zM15 317h2v2h-2zM33 317h2v2h-2zM51 317h2v2h-2zM68 317h2v2h-2zM86 317h2v2h-2zM104 317h2v2h-2zM122 317h2v2h-2zM140 317h2v2h-2zM158 317h2v2h-2zM176 317h2v2h-2zM194 317h2v2h-2zM211 317h2v2h-2zM229 317h2v2h-2zM247 317h2v2h-2zM265 317h2v2h-2zM283 317h2v2h-2zM301 317h2v2h-2zM319 317h2v2h-2zM337 317h2v2h-2zM354 317h2v2h-2zM372 317h2v2h-2zM390 317h2v2h-2zM408 317h2v2h-2zM426 317h2v2h-2zM444 317h2v2h-2zM462 317h2v2h-2zM480 317h2v2h-2zM497 317h2v2h-2zM515 317h2v2h-2zM533 317h2v2h-2zM551 317h2v2h-2zM569 317h2v2h-2zM587 317h2v2h-2zM605 317h2v2h-2zM623 317h2v2h-2zM640 317h2v2h-2zM658 317h2v2h-2zM676 317h2v2h-2zM694 317h2v2h-2zM712 317h2v2h-2zM730 317h2v2h-2zM748 317h2v2h-2zM766 317h2v2h-2zM783 317h2v2h-2zM801 317h2v2h-2zM819 317h2v2h-2zM837 317h2v2h-2zM855 317h2v2h-2zM873 317h2v2h-2zM891 317h2v2h-2zM15 335h2v2h-2zM33 335h2v2h-2zM51 335h2v2h-2zM68 335h2v2h-2zM86 335h2v2h-2zM104 335h2v2h-2zM122 335h2v2h-2zM140 335h2v2h-2zM158 335h2v2h-2zM176 335h2v2h-2zM194 335h2v2h-2zM211 335h2v2h-2zM229 335h2v2h-2zM247 335h2v2h-2zM265 335h2v2h-2zM283 335h2v2h-2zM301 335h2v2h-2zM319 335h2v2h-2zM337 335h2v2h-2zM354 335h2v2h-2zM372 335h2v2h-2zM390 335h2v2h-2zM408 335h2v2h-2zM426 335h2v2h-2zM444 335h2v2h-2zM462 335h2v2h-2zM480 335h2v2h-2zM497 335h2v2h-2zM515 335h2v2h-2zM533 335h2v2h-2zM551 335h2v2h-2zM569 335h2v2h-2zM587 335h2v2h-2zM605 335h2v2h-2zM623 335h2v2h-2zM640 335h2v2h-2zM658 335h2v2h-2zM676 335h2v2h-2zM694 335h2v2h-2zM712 335h2v2h-2zM730 335h2v2h-2zM748 335h2v2h-2zM766 335h2v2h-2zM783 335h2v2h-2zM801 335h2v2h-2zM819 335h2v2h-2zM837 335h2v2h-2zM855 335h2v2h-2zM873 335h2v2h-2zM891 335h2v2h-2zM15 353h2v2h-2zM33 353h2v2h-2zM51 353h2v2h-2zM68 353h2v2h-2zM86 353h2v2h-2zM104 353h2v2h-2zM122 353h2v2h-2zM140 353h2v2h-2zM158 353h2v2h-2zM176 353h2v2h-2zM194 353h2v2h-2zM211 353h2v2h-2zM229 353h2v2h-2zM247 353h2v2h-2zM265 353h2v2h-2zM283 353h2v2h-2zM301 353h2v2h-2zM319 353h2v2h-2zM337 353h2v2h-2zM354 353h2v2h-2zM372 353h2v2h-2zM390 353h2v2h-2zM408 353h2v2h-2zM426 353h2v2h-2zM444 353h2v2h-2zM462 353h2v2h-2zM480 353h2v2h-2zM497 353h2v2h-2zM515 353h2v2h-2zM533 353h2v2h-2zM551 353h2v2h-2zM569 353h2v2h-2zM587 353h2v2h-2zM605 353h2v2h-2zM623 353h2v2h-2zM640 353h2v2h-2zM658 353h2v2h-2zM676 353h2v2h-2zM694 353h2v2h-2zM712 353h2v2h-2zM730 353h2v2h-2zM748 353h2v2h-2zM766 353h2v2h-2zM783 353h2v2h-2zM801 353h2v2h-2zM819 353h2v2h-2zM837 353h2v2h-2zM855 353h2v2h-2zM873 353h2v2h-2zM891 353h2v2h-2zM15 370h2v2h-2zM33 370h2v2h-2zM51 370h2v2h-2zM68 370h2v2h-2zM86 370h2v2h-2zM104 370h2v2h-2zM122 370h2v2h-2zM140 370h2v2h-2zM158 370h2v2h-2zM176 370h2v2h-2zM194 370h2v2h-2zM211 370h2v2h-2zM229 370h2v2h-2zM247 370h2v2h-2zM265 370h2v2h-2zM283 370h2v2h-2zM301 370h2v2h-2zM319 370h2v2h-2zM337 370h2v2h-2zM354 370h2v2h-2zM372 370h2v2h-2zM390 370h2v2h-2zM408 370h2v2h-2zM426 370h2v2h-2zM444 370h2v2h-2zM462 370h2v2h-2zM480 370h2v2h-2zM497 370h2v2h-2zM515 370h2v2h-2zM533 370h2v2h-2zM551 370h2v2h-2zM569 370h2v2h-2zM587 370h2v2h-2zM605 370h2v2h-2zM623 370h2v2h-2zM640 370h2v2h-2zM658 370h2v2h-2zM676 370h2v2h-2zM694 370h2v2h-2zM712 370h2v2h-2zM730 370h2v2h-2zM748 370h2v2h-2zM766 370h2v2h-2zM783 370h2v2h-2zM801 370h2v2h-2zM819 370h2v2h-2zM837 370h2v2h-2zM855 370h2v2h-2zM873 370h2v2h-2zM891 370h2v2h-2zM15 388h2v2h-2zM33 388h2v2h-2zM51 388h2v2h-2zM68 388h2v2h-2zM86 388h2v2h-2zM104 388h2v2h-2zM122 388h2v2h-2zM140 388h2v2h-2zM158 388h2v2h-2zM176 388h2v2h-2zM194 388h2v2h-2zM211 388h2v2h-2zM229 388h2v2h-2zM247 388h2v2h-2zM265 388h2v2h-2zM283 388h2v2h-2zM301 388h2v2h-2zM319 388h2v2h-2zM337 388h2v2h-2zM354 388h2v2h-2zM372 388h2v2h-2zM390 388h2v2h-2zM408 388h2v2h-2zM426 388h2v2h-2zM444 388h2v2h-2zM462 388h2v2h-2zM480 388h2v2h-2zM497 388h2v2h-2zM515 388h2v2h-2zM533 388h2v2h-2zM551 388h2v2h-2zM569 388h2v2h-2zM587 388h2v2h-2zM605 388h2v2h-2zM623 388h2v2h-2zM640 388h2v2h-2zM658 388h2v2h-2zM676 388h2v2h-2zM694 388h2v2h-2zM712 388h2v2h-2zM730 388h2v2h-2zM748 388h2v2h-2zM766 388h2v2h-2zM783 388h2v2h-2zM801 388h2v2h-2zM819 388h2v2h-2zM837 388h2v2h-2zM855 388h2v2h-2zM873 388h2v2h-2zM891 388h2v2h-2zM15 406h2v2h-2zM33 406h2v2h-2zM51 406h2v2h-2zM68 406h2v2h-2zM86 406h2v2h-2zM104 406h2v2h-2zM122 406h2v2h-2zM140 406h2v2h-2zM158 406h2v2h-2zM176 406h2v2h-2zM194 406h2v2h-2zM211 406h2v2h-2zM229 406h2v2h-2zM247 406h2v2h-2zM265 406h2v2h-2zM283 406h2v2h-2zM301 406h2v2h-2zM319 406h2v2h-2zM337 406h2v2h-2zM354 406h2v2h-2zM372 406h2v2h-2zM390 406h2v2h-2zM408 406h2v2h-2zM426 406h2v2h-2zM444 406h2v2h-2zM462 406h2v2h-2zM480 406h2v2h-2zM497 406h2v2h-2zM515 406h2v2h-2zM533 406h2v2h-2zM551 406h2v2h-2zM569 406h2v2h-2zM587 406h2v2h-2zM605 406h2v2h-2zM623 406h2v2h-2zM640 406h2v2h-2zM658 406h2v2h-2zM676 406h2v2h-2zM694 406h2v2h-2zM712 406h2v2h-2zM730 406h2v2h-2zM748 406h2v2h-2zM766 406h2v2h-2zM783 406h2v2h-2zM801 406h2v2h-2zM819 406h2v2h-2zM837 406h2v2h-2zM855 406h2v2h-2zM873 406h2v2h-2zM891 406h2v2h-2zM15 424h2v2h-2zM33 424h2v2h-2zM51 424h2v2h-2zM68 424h2v2h-2zM86 424h2v2h-2zM104 424h2v2h-2zM122 424h2v2h-2zM140 424h2v2h-2zM158 424h2v2h-2zM176 424h2v2h-2zM194 424h2v2h-2zM211 424h2v2h-2zM229 424h2v2h-2zM247 424h2v2h-2zM265 424h2v2h-2zM283 424h2v2h-2zM301 424h2v2h-2zM319 424h2v2h-2zM337 424h2v2h-2zM354 424h2v2h-2zM372 424h2v2h-2zM390 424h2v2h-2zM408 424h2v2h-2zM426 424h2v2h-2zM444 424h2v2h-2zM462 424h2v2h-2zM480 424h2v2h-2zM497 424h2v2h-2zM515 424h2v2h-2zM533 424h2v2h-2zM551 424h2v2h-2zM569 424h2v2h-2zM587 424h2v2h-2zM605 424h2v2h-2zM623 424h2v2h-2zM640 424h2v2h-2zM658 424h2v2h-2zM676 424h2v2h-2zM694 424h2v2h-2zM712 424h2v2h-2zM730 424h2v2h-2zM748 424h2v2h-2zM766 424h2v2h-2zM783 424h2v2h-2zM801 424h2v2h-2zM819 424h2v2h-2zM837 424h2v2h-2zM855 424h2v2h-2zM873 424h2v2h-2zM891 424h2v2h-2zM15 442h2v2h-2zM33 442h2v2h-2zM51 442h2v2h-2zM68 442h2v2h-2zM86 442h2v2h-2zM104 442h2v2h-2zM122 442h2v2h-2zM140 442h2v2h-2zM158 442h2v2h-2zM176 442h2v2h-2zM194 442h2v2h-2zM211 442h2v2h-2zM229 442h2v2h-2zM247 442h2v2h-2zM265 442h2v2h-2zM283 442h2v2h-2zM301 442h2v2h-2zM319 442h2v2h-2zM337 442h2v2h-2zM354 442h2v2h-2zM372 442h2v2h-2zM390 442h2v2h-2zM408 442h2v2h-2zM426 442h2v2h-2zM444 442h2v2h-2zM462 442h2v2h-2zM480 442h2v2h-2zM497 442h2v2h-2zM515 442h2v2h-2zM533 442h2v2h-2zM551 442h2v2h-2zM569 442h2v2h-2zM587 442h2v2h-2zM605 442h2v2h-2zM623 442h2v2h-2zM640 442h2v2h-2zM658 442h2v2h-2zM676 442h2v2h-2zM694 442h2v2h-2zM712 442h2v2h-2zM730 442h2v2h-2zM748 442h2v2h-2zM766 442h2v2h-2zM783 442h2v2h-2zM801 442h2v2h-2zM819 442h2v2h-2zM837 442h2v2h-2zM855 442h2v2h-2zM873 442h2v2h-2zM891 442h2v2h-2zM15 460h2v2h-2zM33 460h2v2h-2zM51 460h2v2h-2zM68 460h2v2h-2zM86 460h2v2h-2zM104 460h2v2h-2zM122 460h2v2h-2zM140 460h2v2h-2zM158 460h2v2h-2zM176 460h2v2h-2zM194 460h2v2h-2zM211 460h2v2h-2zM229 460h2v2h-2zM247 460h2v2h-2zM265 460h2v2h-2zM283 460h2v2h-2zM301 460h2v2h-2zM319 460h2v2h-2zM337 460h2v2h-2zM354 460h2v2h-2zM372 460h2v2h-2zM390 460h2v2h-2zM408 460h2v2h-2zM426 460h2v2h-2zM444 460h2v2h-2zM462 460h2v2h-2zM480 460h2v2h-2zM497 460h2v2h-2zM515 460h2v2h-2zM533 460h2v2h-2zM551 460h2v2h-2zM569 460h2v2h-2zM587 460h2v2h-2zM605 460h2v2h-2zM623 460h2v2h-2zM640 460h2v2h-2zM658 460h2v2h-2zM676 460h2v2h-2zM694 460h2v2h-2zM712 460h2v2h-2zM730 460h2v2h-2zM748 460h2v2h-2zM766 460h2v2h-2zM783 460h2v2h-2zM801 460h2v2h-2zM819 460h2v2h-2zM837 460h2v2h-2zM855 460h2v2h-2zM873 460h2v2h-2zM891 460h2v2h-2zM15 478h2v2h-2zM33 478h2v2h-2zM51 478h2v2h-2zM68 478h2v2h-2zM86 478h2v2h-2zM104 478h2v2h-2zM122 478h2v2h-2zM140 478h2v2h-2zM158 478h2v2h-2zM176 478h2v2h-2zM194 478h2v2h-2zM211 478h2v2h-2zM229 478h2v2h-2zM247 478h2v2h-2zM265 478h2v2h-2zM283 478h2v2h-2zM301 478h2v2h-2zM319 478h2v2h-2zM337 478h2v2h-2zM354 478h2v2h-2zM372 478h2v2h-2zM390 478h2v2h-2zM408 478h2v2h-2zM426 478h2v2h-2zM444 478h2v2h-2zM462 478h2v2h-2zM480 478h2v2h-2zM497 478h2v2h-2zM515 478h2v2h-2zM533 478h2v2h-2zM551 478h2v2h-2zM569 478h2v2h-2zM587 478h2v2h-2zM605 478h2v2h-2zM623 478h2v2h-2zM640 478h2v2h-2zM658 478h2v2h-2zM676 478h2v2h-2zM694 478h2v2h-2zM712 478h2v2h-2zM730 478h2v2h-2zM748 478h2v2h-2zM766 478h2v2h-2zM783 478h2v2h-2zM801 478h2v2h-2zM819 478h2v2h-2zM837 478h2v2h-2zM855 478h2v2h-2zM873 478h2v2h-2zM891 478h2v2h-2zM15 496h2v2h-2zM33 496h2v2h-2zM51 496h2v2h-2zM68 496h2v2h-2zM86 496h2v2h-2zM104 496h2v2h-2zM122 496h2v2h-2zM140 496h2v2h-2zM158 496h2v2h-2zM176 496h2v2h-2zM194 496h2v2h-2zM211 496h2v2h-2zM229 496h2v2h-2zM247 496h2v2h-2zM265 496h2v2h-2zM283 496h2v2h-2zM301 496h2v2h-2zM319 496h2v2h-2zM337 496h2v2h-2zM354 496h2v2h-2zM372 496h2v2h-2zM390 496h2v2h-2zM408 496h2v2h-2zM426 496h2v2h-2zM444 496h2v2h-2zM462 496h2v2h-2zM480 496h2v2h-2zM497 496h2v2h-2zM515 496h2v2h-2zM533 496h2v2h-2zM551 496h2v2h-2zM569 496h2v2h-2zM587 496h2v2h-2zM605 496h2v2h-2zM623 496h2v2h-2zM640 496h2v2h-2zM658 496h2v2h-2zM676 496h2v2h-2zM694 496h2v2h-2zM712 496h2v2h-2zM730 496h2v2h-2zM748 496h2v2h-2zM766 496h2v2h-2zM783 496h2v2h-2zM801 496h2v2h-2zM819 496h2v2h-2zM837 496h2v2h-2zM855 496h2v2h-2zM873 496h2v2h-2zM891 496h2v2h-2zM15 513h2v2h-2zM33 513h2v2h-2zM51 513h2v2h-2zM68 513h2v2h-2zM86 513h2v2h-2zM104 513h2v2h-2zM122 513h2v2h-2zM140 513h2v2h-2zM158 513h2v2h-2zM176 513h2v2h-2zM194 513h2v2h-2zM211 513h2v2h-2zM229 513h2v2h-2zM247 513h2v2h-2zM265 513h2v2h-2zM283 513h2v2h-2zM301 513h2v2h-2zM319 513h2v2h-2zM337 513h2v2h-2zM354 513h2v2h-2zM372 513h2v2h-2zM390 513h2v2h-2zM408 513h2v2h-2zM426 513h2v2h-2zM444 513h2v2h-2zM462 513h2v2h-2zM480 513h2v2h-2zM497 513h2v2h-2zM515 513h2v2h-2zM533 513h2v2h-2zM551 513h2v2h-2zM569 513h2v2h-2zM587 513h2v2h-2zM605 513h2v2h-2zM623 513h2v2h-2zM640 513h2v2h-2zM658 513h2v2h-2zM676 513h2v2h-2zM694 513h2v2h-2zM712 513h2v2h-2zM730 513h2v2h-2zM748 513h2v2h-2zM766 513h2v2h-2zM783 513h2v2h-2zM801 513h2v2h-2zM819 513h2v2h-2zM837 513h2v2h-2zM855 513h2v2h-2zM873 513h2v2h-2zM891 513h2v2h-2zM15 531h2v2h-2zM33 531h2v2h-2zM51 531h2v2h-2zM68 531h2v2h-2zM86 531h2v2h-2zM104 531h2v2h-2zM122 531h2v2h-2zM140 531h2v2h-2zM158 531h2v2h-2zM176 531h2v2h-2zM194 531h2v2h-2zM211 531h2v2h-2zM229 531h2v2h-2zM247 531h2v2h-2zM265 531h2v2h-2zM283 531h2v2h-2zM301 531h2v2h-2zM319 531h2v2h-2zM337 531h2v2h-2zM354 531h2v2h-2zM372 531h2v2h-2zM390 531h2v2h-2zM408 531h2v2h-2zM426 531h2v2h-2zM444 531h2v2h-2zM462 531h2v2h-2zM480 531h2v2h-2zM497 531h2v2h-2zM515 531h2v2h-2zM533 531h2v2h-2zM551 531h2v2h-2zM569 531h2v2h-2zM587 531h2v2h-2zM605 531h2v2h-2zM623 531h2v2h-2zM640 531h2v2h-2zM658 531h2v2h-2zM676 531h2v2h-2zM694 531h2v2h-2zM712 531h2v2h-2zM730 531h2v2h-2zM748 531h2v2h-2zM766 531h2v2h-2zM783 531h2v2h-2zM801 531h2v2h-2zM819 531h2v2h-2zM837 531h2v2h-2zM855 531h2v2h-2zM873 531h2v2h-2zM891 531h2v2h-2zM15 549h2v2h-2zM33 549h2v2h-2zM51 549h2v2h-2zM68 549h2v2h-2zM86 549h2v2h-2zM104 549h2v2h-2zM122 549h2v2h-2zM140 549h2v2h-2zM158 549h2v2h-2zM176 549h2v2h-2zM194 549h2v2h-2zM211 549h2v2h-2zM229 549h2v2h-2zM247 549h2v2h-2zM265 549h2v2h-2zM283 549h2v2h-2zM301 549h2v2h-2zM319 549h2v2h-2zM337 549h2v2h-2zM354 549h2v2h-2zM372 549h2v2h-2zM390 549h2v2h-2zM408 549h2v2h-2zM426 549h2v2h-2zM444 549h2v2h-2zM462 549h2v2h-2zM480 549h2v2h-2zM497 549h2v2h-2zM515 549h2v2h-2zM533 549h2v2h-2zM551 549h2v2h-2zM569 549h2v2h-2zM587 549h2v2h-2zM605 549h2v2h-2zM623 549h2v2h-2zM640 549h2v2h-2zM658 549h2v2h-2zM676 549h2v2h-2zM694 549h2v2h-2zM712 549h2v2h-2zM730 549h2v2h-2zM748 549h2v2h-2zM766 549h2v2h-2zM783 549h2v2h-2zM801 549h2v2h-2zM819 549h2v2h-2zM837 549h2v2h-2zM855 549h2v2h-2zM873 549h2v2h-2zM891 549h2v2h-2zM15 567h2v2h-2zM33 567h2v2h-2zM51 567h2v2h-2zM68 567h2v2h-2zM86 567h2v2h-2zM104 567h2v2h-2zM122 567h2v2h-2zM140 567h2v2h-2zM158 567h2v2h-2zM176 567h2v2h-2zM194 567h2v2h-2zM211 567h2v2h-2zM229 567h2v2h-2zM247 567h2v2h-2zM265 567h2v2h-2zM283 567h2v2h-2zM301 567h2v2h-2zM319 567h2v2h-2zM337 567h2v2h-2zM354 567h2v2h-2zM372 567h2v2h-2zM390 567h2v2h-2zM408 567h2v2h-2zM426 567h2v2h-2zM444 567h2v2h-2zM462 567h2v2h-2zM480 567h2v2h-2zM497 567h2v2h-2zM515 567h2v2h-2zM533 567h2v2h-2zM551 567h2v2h-2zM569 567h2v2h-2zM587 567h2v2h-2zM605 567h2v2h-2zM623 567h2v2h-2zM640 567h2v2h-2zM658 567h2v2h-2zM676 567h2v2h-2zM694 567h2v2h-2zM712 567h2v2h-2zM730 567h2v2h-2zM748 567h2v2h-2zM766 567h2v2h-2zM783 567h2v2h-2zM801 567h2v2h-2zM819 567h2v2h-2zM837 567h2v2h-2zM855 567h2v2h-2zM873 567h2v2h-2zM891 567h2v2h-2zM15 585h2v2h-2zM33 585h2v2h-2zM51 585h2v2h-2zM68 585h2v2h-2zM86 585h2v2h-2zM104 585h2v2h-2zM122 585h2v2h-2zM140 585h2v2h-2zM158 585h2v2h-2zM176 585h2v2h-2zM194 585h2v2h-2zM211 585h2v2h-2zM229 585h2v2h-2zM247 585h2v2h-2zM265 585h2v2h-2zM283 585h2v2h-2zM301 585h2v2h-2zM319 585h2v2h-2zM337 585h2v2h-2zM354 585h2v2h-2zM372 585h2v2h-2zM390 585h2v2h-2zM408 585h2v2h-2zM426 585h2v2h-2zM444 585h2v2h-2zM462 585h2v2h-2zM480 585h2v2h-2zM497 585h2v2h-2zM515 585h2v2h-2zM533 585h2v2h-2zM551 585h2v2h-2zM569 585h2v2h-2zM587 585h2v2h-2zM605 585h2v2h-2zM623 585h2v2h-2zM640 585h2v2h-2zM658 585h2v2h-2zM676 585h2v2h-2zM694 585h2v2h-2zM712 585h2v2h-2zM730 585h2v2h-2zM748 585h2v2h-2zM766 585h2v2h-2zM783 585h2v2h-2zM801 585h2v2h-2zM819 585h2v2h-2zM837 585h2v2h-2zM855 585h2v2h-2zM873 585h2v2h-2zM891 585h2v2h-2zM15 603h2v2h-2zM33 603h2v2h-2zM51 603h2v2h-2zM68 603h2v2h-2zM86 603h2v2h-2zM104 603h2v2h-2zM122 603h2v2h-2zM140 603h2v2h-2zM158 603h2v2h-2zM176 603h2v2h-2zM194 603h2v2h-2zM211 603h2v2h-2zM229 603h2v2h-2zM247 603h2v2h-2zM265 603h2v2h-2zM283 603h2v2h-2zM301 603h2v2h-2zM319 603h2v2h-2zM337 603h2v2h-2zM354 603h2v2h-2zM372 603h2v2h-2zM390 603h2v2h-2zM408 603h2v2h-2zM426 603h2v2h-2zM444 603h2v2h-2zM462 603h2v2h-2zM480 603h2v2h-2zM497 603h2v2h-2zM515 603h2v2h-2zM533 603h2v2h-2zM551 603h2v2h-2zM569 603h2v2h-2zM587 603h2v2h-2zM605 603h2v2h-2zM623 603h2v2h-2zM640 603h2v2h-2zM658 603h2v2h-2zM676 603h2v2h-2zM694 603h2v2h-2zM712 603h2v2h-2zM730 603h2v2h-2zM748 603h2v2h-2zM766 603h2v2h-2zM783 603h2v2h-2zM801 603h2v2h-2zM819 603h2v2h-2zM837 603h2v2h-2zM855 603h2v2h-2zM873 603h2v2h-2zM891 603h2v2h-2zM15 621h2v2h-2zM33 621h2v2h-2zM51 621h2v2h-2zM68 621h2v2h-2zM86 621h2v2h-2zM104 621h2v2h-2zM122 621h2v2h-2zM140 621h2v2h-2zM158 621h2v2h-2zM176 621h2v2h-2zM194 621h2v2h-2zM211 621h2v2h-2zM229 621h2v2h-2zM247 621h2v2h-2zM265 621h2v2h-2zM283 621h2v2h-2zM301 621h2v2h-2zM319 621h2v2h-2zM337 621h2v2h-2zM354 621h2v2h-2zM372 621h2v2h-2zM390 621h2v2h-2zM408 621h2v2h-2zM426 621h2v2h-2zM444 621h2v2h-2zM462 621h2v2h-2zM480 621h2v2h-2zM497 621h2v2h-2zM515 621h2v2h-2zM533 621h2v2h-2zM551 621h2v2h-2zM569 621h2v2h-2zM587 621h2v2h-2zM605 621h2v2h-2zM623 621h2v2h-2zM640 621h2v2h-2zM658 621h2v2h-2zM676 621h2v2h-2zM694 621h2v2h-2zM712 621h2v2h-2zM730 621h2v2h-2zM748 621h2v2h-2zM766 621h2v2h-2zM783 621h2v2h-2zM801 621h2v2h-2zM819 621h2v2h-2zM837 621h2v2h-2zM855 621h2v2h-2zM873 621h2v2h-2zM891 621h2v2h-2zM15 639h2v2h-2zM33 639h2v2h-2zM51 639h2v2h-2zM68 639h2v2h-2zM86 639h2v2h-2zM104 639h2v2h-2zM122 639h2v2h-2zM140 639h2v2h-2zM158 639h2v2h-2zM176 639h2v2h-2zM194 639h2v2h-2zM211 639h2v2h-2zM229 639h2v2h-2zM247 639h2v2h-2zM265 639h2v2h-2zM283 639h2v2h-2zM301 639h2v2h-2zM319 639h2v2h-2zM337 639h2v2h-2zM354 639h2v2h-2zM372 639h2v2h-2zM390 639h2v2h-2zM408 639h2v2h-2zM426 639h2v2h-2zM444 639h2v2h-2zM462 639h2v2h-2zM480 639h2v2h-2zM497 639h2v2h-2zM515 639h2v2h-2zM533 639h2v2h-2zM551 639h2v2h-2zM569 639h2v2h-2zM587 639h2v2h-2zM605 639h2v2h-2zM623 639h2v2h-2zM640 639h2v2h-2zM658 639h2v2h-2zM676 639h2v2h-2zM694 639h2v2h-2zM712 639h2v2h-2zM730 639h2v2h-2zM748 639h2v2h-2zM766 639h2v2h-2zM783 639h2v2h-2zM801 639h2v2h-2zM819 639h2v2h-2zM837 639h2v2h-2zM855 639h2v2h-2zM873 639h2v2h-2zM891 639h2v2h-2zM15 656h2v2h-2zM33 656h2v2h-2zM51 656h2v2h-2zM68 656h2v2h-2zM86 656h2v2h-2zM104 656h2v2h-2zM122 656h2v2h-2zM140 656h2v2h-2zM158 656h2v2h-2zM176 656h2v2h-2zM194 656h2v2h-2zM211 656h2v2h-2zM229 656h2v2h-2zM247 656h2v2h-2zM265 656h2v2h-2zM283 656h2v2h-2zM301 656h2v2h-2zM319 656h2v2h-2zM337 656h2v2h-2zM354 656h2v2h-2zM372 656h2v2h-2zM390 656h2v2h-2zM408 656h2v2h-2zM426 656h2v2h-2zM444 656h2v2h-2zM462 656h2v2h-2zM480 656h2v2h-2zM497 656h2v2h-2zM515 656h2v2h-2zM533 656h2v2h-2zM551 656h2v2h-2zM569 656h2v2h-2zM587 656h2v2h-2zM605 656h2v2h-2zM623 656h2v2h-2zM640 656h2v2h-2zM658 656h2v2h-2zM676 656h2v2h-2zM694 656h2v2h-2zM712 656h2v2h-2zM730 656h2v2h-2zM748 656h2v2h-2zM766 656h2v2h-2zM783 656h2v2h-2zM801 656h2v2h-2zM819 656h2v2h-2zM837 656h2v2h-2zM855 656h2v2h-2zM873 656h2v2h-2zM891 656h2v2h-2zM15 674h2v2h-2zM33 674h2v2h-2zM51 674h2v2h-2zM68 674h2v2h-2zM86 674h2v2h-2zM104 674h2v2h-2zM122 674h2v2h-2zM140 674h2v2h-2zM158 674h2v2h-2zM176 674h2v2h-2zM194 674h2v2h-2zM211 674h2v2h-2zM229 674h2v2h-2zM247 674h2v2h-2zM265 674h2v2h-2zM283 674h2v2h-2zM301 674h2v2h-2zM319 674h2v2h-2zM337 674h2v2h-2zM354 674h2v2h-2zM372 674h2v2h-2zM390 674h2v2h-2zM408 674h2v2h-2zM426 674h2v2h-2zM444 674h2v2h-2zM462 674h2v2h-2zM480 674h2v2h-2zM497 674h2v2h-2zM515 674h2v2h-2zM533 674h2v2h-2zM551 674h2v2h-2zM569 674h2v2h-2zM587 674h2v2h-2zM605 674h2v2h-2zM623 674h2v2h-2zM640 674h2v2h-2zM658 674h2v2h-2zM676 674h2v2h-2zM694 674h2v2h-2zM712 674h2v2h-2zM730 674h2v2h-2zM748 674h2v2h-2zM766 674h2v2h-2zM783 674h2v2h-2zM801 674h2v2h-2zM819 674h2v2h-2zM837 674h2v2h-2zM855 674h2v2h-2zM873 674h2v2h-2zM891 674h2v2h-2zM15 692h2v2h-2zM33 692h2v2h-2zM51 692h2v2h-2zM68 692h2v2h-2zM86 692h2v2h-2zM104 692h2v2h-2zM122 692h2v2h-2zM140 692h2v2h-2zM158 692h2v2h-2zM176 692h2v2h-2zM194 692h2v2h-2zM211 692h2v2h-2zM229 692h2v2h-2zM247 692h2v2h-2zM265 692h2v2h-2zM283 692h2v2h-2zM301 692h2v2h-2zM319 692h2v2h-2zM337 692h2v2h-2zM354 692h2v2h-2zM372 692h2v2h-2zM390 692h2v2h-2zM408 692h2v2h-2zM426 692h2v2h-2zM444 692h2v2h-2zM462 692h2v2h-2zM480 692h2v2h-2zM497 692h2v2h-2zM515 692h2v2h-2zM533 692h2v2h-2zM551 692h2v2h-2zM569 692h2v2h-2zM587 692h2v2h-2zM605 692h2v2h-2zM623 692h2v2h-2zM640 692h2v2h-2zM658 692h2v2h-2zM676 692h2v2h-2zM694 692h2v2h-2zM712 692h2v2h-2zM730 692h2v2h-2zM748 692h2v2h-2zM766 692h2v2h-2zM783 692h2v2h-2zM801 692h2v2h-2zM819 692h2v2h-2zM837 692h2v2h-2zM855 692h2v2h-2zM873 692h2v2h-2zM891 692h2v2h-2zM15 710h2v2h-2zM33 710h2v2h-2zM51 710h2v2h-2zM68 710h2v2h-2zM86 710h2v2h-2zM104 710h2v2h-2zM122 710h2v2h-2zM140 710h2v2h-2zM158 710h2v2h-2zM176 710h2v2h-2zM194 710h2v2h-2zM211 710h2v2h-2zM229 710h2v2h-2zM247 710h2v2h-2zM265 710h2v2h-2zM283 710h2v2h-2zM301 710h2v2h-2zM319 710h2v2h-2zM337 710h2v2h-2zM354 710h2v2h-2zM372 710h2v2h-2zM390 710h2v2h-2zM408 710h2v2h-2zM426 710h2v2h-2zM444 710h2v2h-2zM462 710h2v2h-2zM480 710h2v2h-2zM497 710h2v2h-2zM515 710h2v2h-2zM533 710h2v2h-2zM551 710h2v2h-2zM569 710h2v2h-2zM587 710h2v2h-2zM605 710h2v2h-2zM623 710h2v2h-2zM640 710h2v2h-2zM658 710h2v2h-2zM676 710h2v2h-2zM694 710h2v2h-2zM712 710h2v2h-2zM730 710h2v2h-2zM748 710h2v2h-2zM766 710h2v2h-2zM783 710h2v2h-2zM801 710h2v2h-2zM819 710h2v2h-2zM837 710h2v2h-2zM855 710h2v2h-2zM873 710h2v2h-2zM891 710h2v2h-2zM15 728h2v2h-2zM33 728h2v2h-2zM51 728h2v2h-2zM68 728h2v2h-2zM86 728h2v2h-2zM104 728h2v2h-2zM122 728h2v2h-2zM140 728h2v2h-2zM158 728h2v2h-2zM176 728h2v2h-2zM194 728h2v2h-2zM211 728h2v2h-2zM229 728h2v2h-2zM247 728h2v2h-2zM265 728h2v2h-2zM283 728h2v2h-2zM301 728h2v2h-2zM319 728h2v2h-2zM337 728h2v2h-2zM354 728h2v2h-2zM372 728h2v2h-2zM390 728h2v2h-2zM408 728h2v2h-2zM426 728h2v2h-2zM444 728h2v2h-2zM462 728h2v2h-2zM480 728h2v2h-2zM497 728h2v2h-2zM515 728h2v2h-2zM533 728h2v2h-2zM551 728h2v2h-2zM569 728h2v2h-2zM587 728h2v2h-2zM605 728h2v2h-2zM623 728h2v2h-2zM640 728h2v2h-2zM658 728h2v2h-2zM676 728h2v2h-2zM694 728h2v2h-2zM712 728h2v2h-2zM730 728h2v2h-2zM748 728h2v2h-2zM766 728h2v2h-2zM783 728h2v2h-2zM801 728h2v2h-2zM819 728h2v2h-2zM837 728h2v2h-2zM855 728h2v2h-2zM873 728h2v2h-2zM891 728h2v2h-2zM15 746h2v2h-2zM33 746h2v2h-2zM51 746h2v2h-2zM68 746h2v2h-2zM86 746h2v2h-2zM104 746h2v2h-2zM122 746h2v2h-2zM140 746h2v2h-2zM158 746h2v2h-2zM176 746h2v2h-2zM194 746h2v2h-2zM211 746h2v2h-2zM229 746h2v2h-2zM247 746h2v2h-2zM265 746h2v2h-2zM283 746h2v2h-2zM301 746h2v2h-2zM319 746h2v2h-2zM337 746h2v2h-2zM354 746h2v2h-2zM372 746h2v2h-2zM390 746h2v2h-2zM408 746h2v2h-2zM426 746h2v2h-2zM444 746h2v2h-2zM462 746h2v2h-2zM480 746h2v2h-2zM497 746h2v2h-2zM515 746h2v2h-2zM533 746h2v2h-2zM551 746h2v2h-2zM569 746h2v2h-2zM587 746h2v2h-2zM605 746h2v2h-2zM623 746h2v2h-2zM640 746h2v2h-2zM658 746h2v2h-2zM676 746h2v2h-2zM694 746h2v2h-2zM712 746h2v2h-2zM730 746h2v2h-2zM748 746h2v2h-2zM766 746h2v2h-2zM783 746h2v2h-2zM801 746h2v2h-2zM819 746h2v2h-2zM837 746h2v2h-2zM855 746h2v2h-2zM873 746h2v2h-2zM891 746h2v2h-2zM15 764h2v2h-2zM33 764h2v2h-2zM51 764h2v2h-2zM68 764h2v2h-2zM86 764h2v2h-2zM104 764h2v2h-2zM122 764h2v2h-2zM140 764h2v2h-2zM158 764h2v2h-2zM176 764h2v2h-2zM194 764h2v2h-2zM211 764h2v2h-2zM229 764h2v2h-2zM247 764h2v2h-2zM265 764h2v2h-2zM283 764h2v2h-2zM301 764h2v2h-2zM319 764h2v2h-2zM337 764h2v2h-2zM354 764h2v2h-2zM372 764h2v2h-2zM390 764h2v2h-2zM408 764h2v2h-2zM426 764h2v2h-2zM444 764h2v2h-2zM462 764h2v2h-2zM480 764h2v2h-2zM497 764h2v2h-2zM515 764h2v2h-2zM533 764h2v2h-2zM551 764h2v2h-2zM569 764h2v2h-2zM587 764h2v2h-2zM605 764h2v2h-2zM623 764h2v2h-2zM640 764h2v2h-2zM658 764h2v2h-2zM676 764h2v2h-2zM694 764h2v2h-2zM712 764h2v2h-2zM730 764h2v2h-2zM748 764h2v2h-2zM766 764h2v2h-2zM783 764h2v2h-2zM801 764h2v2h-2zM819 764h2v2h-2zM837 764h2v2h-2zM855 764h2v2h-2zM873 764h2v2h-2zM891 764h2v2h-2zM15 782h2v2h-2zM33 782h2v2h-2zM51 782h2v2h-2zM68 782h2v2h-2zM86 782h2v2h-2zM104 782h2v2h-2zM122 782h2v2h-2zM140 782h2v2h-2zM158 782h2v2h-2zM176 782h2v2h-2zM194 782h2v2h-2zM211 782h2v2h-2zM229 782h2v2h-2zM247 782h2v2h-2zM265 782h2v2h-2zM283 782h2v2h-2zM301 782h2v2h-2zM319 782h2v2h-2zM337 782h2v2h-2zM354 782h2v2h-2zM372 782h2v2h-2zM390 782h2v2h-2zM408 782h2v2h-2zM426 782h2v2h-2zM444 782h2v2h-2zM462 782h2v2h-2zM480 782h2v2h-2zM497 782h2v2h-2zM515 782h2v2h-2zM533 782h2v2h-2zM551 782h2v2h-2zM569 782h2v2h-2zM587 782h2v2h-2zM605 782h2v2h-2zM623 782h2v2h-2zM640 782h2v2h-2zM658 782h2v2h-2zM676 782h2v2h-2zM694 782h2v2h-2zM712 782h2v2h-2zM730 782h2v2h-2zM748 782h2v2h-2zM766 782h2v2h-2zM783 782h2v2h-2zM801 782h2v2h-2zM819 782h2v2h-2zM837 782h2v2h-2zM855 782h2v2h-2zM873 782h2v2h-2zM891 782h2v2h-2zM15 799h2v2h-2zM33 799h2v2h-2zM51 799h2v2h-2zM68 799h2v2h-2zM86 799h2v2h-2zM104 799h2v2h-2zM122 799h2v2h-2zM140 799h2v2h-2zM158 799h2v2h-2zM176 799h2v2h-2zM194 799h2v2h-2zM211 799h2v2h-2zM229 799h2v2h-2zM247 799h2v2h-2zM265 799h2v2h-2zM283 799h2v2h-2zM301 799h2v2h-2zM319 799h2v2h-2zM337 799h2v2h-2zM354 799h2v2h-2zM372 799h2v2h-2zM390 799h2v2h-2zM408 799h2v2h-2zM426 799h2v2h-2zM444 799h2v2h-2zM462 799h2v2h-2zM480 799h2v2h-2zM497 799h2v2h-2zM515 799h2v2h-2zM533 799h2v2h-2zM551 799h2v2h-2zM569 799h2v2h-2zM587 799h2v2h-2zM605 799h2v2h-2zM623 799h2v2h-2zM640 799h2v2h-2zM658 799h2v2h-2zM676 799h2v2h-2zM694 799h2v2h-2zM712 799h2v2h-2zM730 799h2v2h-2zM748 799h2v2h-2zM766 799h2v2h-2zM783 799h2v2h-2zM801 799h2v2h-2zM819 799h2v2h-2zM837 799h2v2h-2zM855 799h2v2h-2zM873 799h2v2h-2zM891 799h2v2h-2zM15 817h2v2h-2zM33 817h2v2h-2zM51 817h2v2h-2zM68 817h2v2h-2zM86 817h2v2h-2zM104 817h2v2h-2zM122 817h2v2h-2zM140 817h2v2h-2zM158 817h2v2h-2zM176 817h2v2h-2zM194 817h2v2h-2zM211 817h2v2h-2zM229 817h2v2h-2zM247 817h2v2h-2zM265 817h2v2h-2zM283 817h2v2h-2zM301 817h2v2h-2zM319 817h2v2h-2zM337 817h2v2h-2zM354 817h2v2h-2zM372 817h2v2h-2zM390 817h2v2h-2zM408 817h2v2h-2zM426 817h2v2h-2zM444 817h2v2h-2zM462 817h2v2h-2zM480 817h2v2h-2zM497 817h2v2h-2zM515 817h2v2h-2zM533 817h2v2h-2zM551 817h2v2h-2zM569 817h2v2h-2zM587 817h2v2h-2zM605 817h2v2h-2zM623 817h2v2h-2zM640 817h2v2h-2zM658 817h2v2h-2zM676 817h2v2h-2zM694 817h2v2h-2zM712 817h2v2h-2zM730 817h2v2h-2zM748 817h2v2h-2zM766 817h2v2h-2zM783 817h2v2h-2zM801 817h2v2h-2zM819 817h2v2h-2zM837 817h2v2h-2zM855 817h2v2h-2zM873 817h2v2h-2zM891 817h2v2h-2zM15 835h2v2h-2zM33 835h2v2h-2zM51 835h2v2h-2zM68 835h2v2h-2zM86 835h2v2h-2zM104 835h2v2h-2zM122 835h2v2h-2zM140 835h2v2h-2zM158 835h2v2h-2zM176 835h2v2h-2zM194 835h2v2h-2zM211 835h2v2h-2zM229 835h2v2h-2zM247 835h2v2h-2zM265 835h2v2h-2zM283 835h2v2h-2zM301 835h2v2h-2zM319 835h2v2h-2zM337 835h2v2h-2zM354 835h2v2h-2zM372 835h2v2h-2zM390 835h2v2h-2zM408 835h2v2h-2zM426 835h2v2h-2zM444 835h2v2h-2zM462 835h2v2h-2zM480 835h2v2h-2zM497 835h2v2h-2zM515 835h2v2h-2zM533 835h2v2h-2zM551 835h2v2h-2zM569 835h2v2h-2zM587 835h2v2h-2zM605 835h2v2h-2zM623 835h2v2h-2zM640 835h2v2h-2zM658 835h2v2h-2zM676 835h2v2h-2zM694 835h2v2h-2zM712 835h2v2h-2zM730 835h2v2h-2zM748 835h2v2h-2zM766 835h2v2h-2zM783 835h2v2h-2zM801 835h2v2h-2zM819 835h2v2h-2zM837 835h2v2h-2zM855 835h2v2h-2zM873 835h2v2h-2zM891 835h2v2h-2zM15 853h2v2h-2zM33 853h2v2h-2zM51 853h2v2h-2zM68 853h2v2h-2zM86 853h2v2h-2zM104 853h2v2h-2zM122 853h2v2h-2zM140 853h2v2h-2zM158 853h2v2h-2zM176 853h2v2h-2zM194 853h2v2h-2zM211 853h2v2h-2zM229 853h2v2h-2zM247 853h2v2h-2zM265 853h2v2h-2zM283 853h2v2h-2zM301 853h2v2h-2zM319 853h2v2h-2zM337 853h2v2h-2zM354 853h2v2h-2zM372 853h2v2h-2zM390 853h2v2h-2zM408 853h2v2h-2zM426 853h2v2h-2zM444 853h2v2h-2zM462 853h2v2h-2zM480 853h2v2h-2zM497 853h2v2h-2zM515 853h2v2h-2zM533 853h2v2h-2zM551 853h2v2h-2zM569 853h2v2h-2zM587 853h2v2h-2zM605 853h2v2h-2zM623 853h2v2h-2zM640 853h2v2h-2zM658 853h2v2h-2zM676 853h2v2h-2zM694 853h2v2h-2zM712 853h2v2h-2zM730 853h2v2h-2zM748 853h2v2h-2zM766 853h2v2h-2zM783 853h2v2h-2zM801 853h2v2h-2zM819 853h2v2h-2zM837 853h2v2h-2zM855 853h2v2h-2zM873 853h2v2h-2zM891 853h2v2h-2z" fill="#E0E2E7" shape-rendering="crispEdges"/></svg>
<div class="a" style="left:54.9px;top:177.0px;width:283.40px;height:481.00px;border:1.2px solid #D8DBE2;border-radius:7px;background:rgba(247,247,249,0.65)"></div>
<div class="a" style="left:54.9px;top:177.0px;width:283.40px;height:49.00px;border:1.2px solid #D8DBE2;border-radius:7px 7px 0 0;background:#F5F6F8"></div>
<div class="t" style="left:69.60px;top:191.30px;font-size:14.4px;font-weight:700;color:#030615;font-family:'Liberation Mono',monospace;letter-spacing:0px;">raw_files</div>
<div class="t" style="left:69.30px;top:205.59px;font-size:9.75px;font-weight:400;color:#4F5668;font-family:'Liberation Mono',monospace;letter-spacing:-0.01px;">dagster_essentials</div>
<div class="a" style="left:412.6px;top:177.0px;width:283.30px;height:481.00px;border:1.2px solid #D8DBE2;border-radius:7px;background:rgba(247,247,249,0.65)"></div>
<div class="a" style="left:412.6px;top:177.0px;width:283.30px;height:49.00px;border:1.2px solid #D8DBE2;border-radius:7px 7px 0 0;background:#F5F6F8"></div>
<div class="t" style="left:427.00px;top:191.30px;font-size:14.4px;font-weight:700;color:#030615;font-family:'Liberation Mono',monospace;letter-spacing:0px;">ingested</div>
<div class="t" style="left:426.70px;top:205.59px;font-size:9.75px;font-weight:400;color:#4F5668;font-family:'Liberation Mono',monospace;letter-spacing:-0.01px;">dagster_essentials</div>
<div class="a" style="left:769.9px;top:72.8px;width:154.10px;height:197.80px;border:1.2px solid #D8DBE2;border-radius:7px;background:rgba(247,247,249,0.65)"></div>
<div class="a" style="left:769.9px;top:72.8px;width:154.10px;height:49.40px;border:1.2px solid #D8DBE2;border-radius:7px 7px 0 0;background:#F5F6F8"></div>
<div class="t" style="left:784.70px;top:87.20px;font-size:14.4px;font-weight:700;color:#030615;font-family:'Liberation Mono',monospace;letter-spacing:0px;">requests</div>
<div class="t" style="left:784.40px;top:101.79px;font-size:9.75px;font-weight:400;color:#4F5668;font-family:'Liberation Mono',monospace;letter-spacing:-0.01px;">dagster_essentials</div>
<div class="a" style="left:770.2px;top:414.8px;width:153.80px;height:356.50px;border:1.2px solid #D8DBE2;border-radius:7px;background:rgba(247,247,249,0.65)"></div>
<div class="a" style="left:770.2px;top:414.8px;width:153.80px;height:48.50px;border:1.2px solid #D8DBE2;border-radius:7px 7px 0 0;background:#F5F6F8"></div>
<div class="t" style="left:783.70px;top:427.90px;font-size:14.4px;font-weight:700;color:#030615;font-family:'Liberation Mono',monospace;letter-spacing:0px;">metrics</div>
<div class="t" style="left:783.40px;top:443.79px;font-size:9.75px;font-weight:400;color:#4F5668;font-family:'Liberation Mono',monospace;letter-spacing:-0.01px;">dagster_essentials</div>
<svg class="a" style="left:-376px;top:-216px;" width="1778" height="1071" viewBox="0 0 1778 1071"><path d="M703.4 519.8 L797 519.9" stroke="#DFE1E6" stroke-width="3.2"/><path d="M802.5 519.9 L795.0 514.9 L796.5 519.9 L795.0 524.9 Z" fill="#DFE1E6"/><path d="M703 793.9 L797 793.9" stroke="#7E889B" stroke-width="3.4"/><path d="M802.7 793.9 L795.2 788.9 L796.7 793.9 L795.2 798.9 Z" fill="#7E889B"/><path d="M1060.2 519.9 C1107.6 519.9 1107.6 415.2 1155 415.2" stroke="#DFE1E6" stroke-width="3.2" fill="none"/><path d="M1160.4 415.2 L1152.9 410.2 L1154.4 415.2 L1152.9 420.2 Z" fill="#DFE1E6"/><path d="M1060.2 519.9 C1107.6 519.9 1107.6 757 1155 757" stroke="#DFE1E6" stroke-width="3.2" fill="none"/><path d="M1160.4 757 L1152.9 752 L1154.4 757 L1152.9 762 Z" fill="#DFE1E6"/><path d="M1060.2 793.9 C1107.6 793.9 1107.6 415.2 1155 415.2" stroke="#DFE1E6" stroke-width="3.2" fill="none"/><path d="M1060.2 793.9 C1107.6 793.9 1107.6 757 1155 757" stroke="#DFE1E6" stroke-width="3.2" fill="none"/><path d="M1060.2 793.9 C1286.1 793.9 1286.1 928 1512 928" stroke="#DFE1E6" stroke-width="3.2" fill="none"/></svg>
<svg class="a" style="left:318.4px;top:197px;" width="6" height="10" viewBox="0 0 6 10"><path d="M0.8 0.8 L3 3 L5.2 0.8 M0.8 8.5 L3 6.3 L5.2 8.5" stroke="#030615" stroke-width="1.4" fill="none"/></svg>
<svg class="a" style="left:675.8px;top:197px;" width="6" height="10" viewBox="0 0 6 10"><path d="M0.8 0.8 L3 3 L5.2 0.8 M0.8 8.5 L3 6.3 L5.2 8.5" stroke="#030615" stroke-width="1.4" fill="none"/></svg>
<div class="a" style="left:433.3px;top:269.3px;width:242.40px;height:63.70px;border:1.2px solid #D3D6DD;border-radius:7px;background:#fff;overflow:hidden"></div>
<div class="a" style="left:434.5px;top:270.5px;width:240.00px;height:20.10px;background:#EFF0F3;border-radius:5px 5px 0 0"></div>
<svg class="a" style="left:440.6px;top:275.05px;" width="10" height="10" viewBox="0 0 10 10"><rect x="0.5" y="0.5" width="9" height="9" rx="1.3" stroke="#030615" stroke-width="1.1" fill="#fff"/><path d="M0.5 3.2 L9.5 3.2 M0.5 6.3 L9.5 6.3 M3.5 3.2 L3.5 9.5 M6.6 3.2 L6.6 9.5" stroke="#030615" stroke-width="1"/><path d="M1 1.1 L9 1.1" stroke="#030615" stroke-width="0.8"/></svg>
<div class="t" style="left:455.60px;top:275.53px;font-size:11.1px;font-weight:700;color:#030615;font-family:'Liberation Mono',monospace;letter-spacing:0px;">taxi_zones</div>
<div class="t" style="left:440.60px;top:297.20px;font-size:9.75px;font-weight:400;color:#687186;font-family:'Liberation Sans',sans-serif;letter-spacing:0.05px;">The raw taxi zones dataset, loaded into a DuckD…</div>
<div class="a" style="left:434.5px;top:312px;width:240.00px;height:19.80px;background:#E7F6EC;border-radius:0 0 5px 5px"></div>
<div class="t" style="left:440.60px;top:318.20px;font-size:9.75px;font-weight:400;color:#2A7A4B;font-family:'Liberation Sans',sans-serif;letter-spacing:0.1px;">Materialized</div>
<div class="t" style="left:591.90px;top:318.20px;font-size:9.75px;font-weight:400;color:#34348F;font-family:'Liberation Sans',sans-serif;letter-spacing:0.12px;width:76px;text-align:right">Feb 13, 8:00 AM</div>
<div class="a" style="left:75.8px;top:269.3px;width:242.40px;height:63.70px;border:1.2px solid #D3D6DD;border-radius:7px;background:#fff;overflow:hidden"></div>
<div class="a" style="left:77.0px;top:270.5px;width:240.00px;height:20.10px;background:#EFF0F3;border-radius:5px 5px 0 0"></div>
<svg class="a" style="left:83.1px;top:275.05px;" width="10" height="10" viewBox="0 0 10 10"><rect x="0.5" y="0.5" width="9" height="9" rx="1.3" stroke="#030615" stroke-width="1.1" fill="#fff"/><path d="M0.5 3.2 L9.5 3.2 M0.5 6.3 L9.5 6.3 M3.5 3.2 L3.5 9.5 M6.6 3.2 L6.6 9.5" stroke="#030615" stroke-width="1"/><path d="M1 1.1 L9 1.1" stroke="#030615" stroke-width="0.8"/></svg>
<div class="t" style="left:98.10px;top:275.53px;font-size:11.1px;font-weight:700;color:#030615;font-family:'Liberation Mono',monospace;letter-spacing:0px;">taxi_zones_file</div>
<div class="t" style="left:83.10px;top:297.20px;font-size:9.75px;font-weight:400;color:#687186;font-family:'Liberation Sans',sans-serif;letter-spacing:0.05px;">The raw CSV file for the taxi zones dataset. Sour…</div>
<div class="a" style="left:77.0px;top:312px;width:240.00px;height:19.80px;background:#E7F6EC;border-radius:0 0 5px 5px"></div>
<div class="t" style="left:83.10px;top:318.20px;font-size:9.75px;font-weight:400;color:#2A7A4B;font-family:'Liberation Sans',sans-serif;letter-spacing:0.1px;">Materialized</div>
<div class="t" style="left:234.40px;top:318.20px;font-size:9.75px;font-weight:400;color:#34348F;font-family:'Liberation Sans',sans-serif;letter-spacing:0.12px;width:76px;text-align:right">Feb 13, 8:00 AM</div>
<div class="a" style="left:790.7px;top:165.4px;width:153.30px;height:63.40px;border:1.2px solid #D3D6DD;border-radius:7px;background:#fff;overflow:hidden"></div>
<div class="a" style="left:791.9px;top:166.6px;width:150.90px;height:20.40px;background:#EFF0F3;border-radius:5px 5px 0 0"></div>
<svg class="a" style="left:798.0px;top:171.3px;" width="10" height="10" viewBox="0 0 10 10"><rect x="0.5" y="0.5" width="9" height="9" rx="1.3" stroke="#030615" stroke-width="1.1" fill="#fff"/><path d="M0.5 3.2 L9.5 3.2 M0.5 6.3 L9.5 6.3 M3.5 3.2 L3.5 9.5 M6.6 3.2 L6.6 9.5" stroke="#030615" stroke-width="1"/><path d="M1 1.1 L9 1.1" stroke="#030615" stroke-width="0.8"/></svg>
<div class="t" style="left:813.00px;top:171.77px;font-size:11.1px;font-weight:700;color:#030615;font-family:'Liberation Mono',monospace;letter-spacing:0px;">adhoc_request</div>
<div class="t" style="left:798.00px;top:193.20px;font-size:9.75px;font-weight:400;color:#687186;font-family:'Liberation Sans',sans-serif;letter-spacing:0.05px;">The response to an request made in the terminal.</div>
<div class="a" style="left:791.9px;top:208px;width:150.90px;height:19.60px;background:#E7F6EC;border-radius:0 0 5px 5px"></div>
<div class="t" style="left:798.00px;top:214.00px;font-size:9.75px;font-weight:400;color:#2A7A4B;font-family:'Liberation Sans',sans-serif;letter-spacing:0.1px;">Materialized</div>
<div class="a" style="left:790.8px;top:508px;width:153.20px;height:61.70px;border:1.2px solid #D3D6DD;border-radius:7px;background:#fff;overflow:hidden"></div>
<div class="a" style="left:792.0px;top:509.2px;width:150.80px;height:19.20px;background:#EFF0F3;border-radius:5px 5px 0 0"></div>
<svg class="a" style="left:798.1px;top:513.3px;" width="10" height="10" viewBox="0 0 10 10"><rect x="0.5" y="0.5" width="9" height="9" rx="1.3" stroke="#030615" stroke-width="1.1" fill="#fff"/><path d="M0.5 3.2 L9.5 3.2 M0.5 6.3 L9.5 6.3 M3.5 3.2 L3.5 9.5 M6.6 3.2 L6.6 9.5" stroke="#030615" stroke-width="1"/><path d="M1 1.1 L9 1.1" stroke="#030615" stroke-width="0.8"/></svg>
<div class="t" style="left:813.10px;top:513.77px;font-size:11.1px;font-weight:700;color:#030615;font-family:'Liberation Mono',monospace;letter-spacing:0px;">manhattan_stats</div>
<div class="t" style="left:798.10px;top:535.20px;font-size:9.75px;font-weight:400;color:#687186;font-family:'Liberation Sans',sans-serif;letter-spacing:0.05px;">Metrics on <span style="letter-spacing:0.6px">taxi trips</span> in Manhattan</div>
<div class="a" style="left:792.0px;top:550px;width:150.80px;height:18.50px;background:#E7F6EC;border-radius:0 0 5px 5px"></div>
<div class="t" style="left:798.10px;top:554.90px;font-size:9.75px;font-weight:400;color:#2A7A4B;font-family:'Liberation Sans',sans-serif;letter-spacing:0.1px;">Materialized</div>
<div class="a" style="left:74.2px;top:532.0px;width:246.00px;height:88.80px;border:2.4px solid #5044DE;border-radius:8.2px;background:#fff;overflow:hidden"></div>
<div class="a" style="left:76.6px;top:534.4px;width:241.20px;height:20.60px;background:#EFF0F3;border-radius:5px 5px 0 0"></div>
<svg class="a" style="left:82.2px;top:538.6px;" width="10" height="10" viewBox="0 0 10 10"><rect x="0.5" y="0.5" width="9" height="9" rx="1.3" stroke="#030615" stroke-width="1.1" fill="#fff"/><path d="M0.5 3.2 L9.5 3.2 M0.5 6.3 L9.5 6.3 M3.5 3.2 L3.5 9.5 M6.6 3.2 L6.6 9.5" stroke="#030615" stroke-width="1"/><path d="M1 1.1 L9 1.1" stroke="#030615" stroke-width="0.8"/></svg>
<div class="t" style="left:96.80px;top:539.07px;font-size:11.1px;font-weight:700;color:#030615;font-family:'Liberation Mono',monospace;letter-spacing:0px;">taxi_trips_file</div>
<div class="t" style="left:82.10px;top:561.40px;font-size:9.75px;font-weight:400;color:#687186;font-family:'Liberation Sans',sans-serif;letter-spacing:0.15px;">The raw parquet files for the taxi trips dataset. S…</div>
<div class="a" style="left:83.2px;top:575.1px;width:74.40px;height:18.00px;background:#E5F6EA;border-radius:4px"></div>
<svg class="a" style="left:107.7px;top:580.1px;" width="9" height="9" viewBox="0 0 9 9"><circle cx="4.3" cy="4.3" r="4.2" fill="#2A7A4B"/><path d="M2.2 4.4 L3.8 5.9 L6.4 3" stroke="#fff" stroke-width="1.2" fill="none"/></svg>
<div class="t" style="left:120.70px;top:580.00px;font-size:9.75px;font-weight:400;color:#2A7A4B;font-family:'Liberation Sans',sans-serif;letter-spacing:0px;">All</div>
<div class="a" style="left:159.85px;top:575.1px;width:74.40px;height:18.00px;background:#EDEEF1;border-radius:4px"></div>
<svg class="a" style="left:187.85px;top:579.9px;" width="10" height="10" viewBox="0 0 10 10"><circle cx="4.5" cy="4.5" r="3.7" stroke="#4B5263" stroke-width="1.1" fill="none" stroke-dasharray="3 1.5"/><path d="M1 1 L8.2 8.2" stroke="#4B5263" stroke-width="1.1"/></svg>
<div class="t" style="left:200.75px;top:580.00px;font-size:9.75px;font-weight:400;color:#4B5263;font-family:'Liberation Sans',sans-serif;letter-spacing:0px;">0</div>
<div class="a" style="left:236.5px;top:575.1px;width:74.40px;height:18.00px;background:#EDEEF1;border-radius:4px"></div>
<svg class="a" style="left:264.1px;top:579.9px;" width="9" height="9" viewBox="0 0 9 9"><circle cx="4.3" cy="4.3" r="4.2" fill="#2B3142"/><rect x="3.8" y="2" width="1.1" height="3.2" fill="#fff"/><rect x="3.8" y="5.9" width="1.1" height="1.1" fill="#fff"/></svg>
<div class="t" style="left:277.60px;top:580.00px;font-size:9.75px;font-weight:400;color:#4B5263;font-family:'Liberation Sans',sans-serif;letter-spacing:0px;">0</div>
<div class="a" style="left:76.6px;top:598.9px;width:241.20px;height:19.50px;background:#E7F6EC;border-radius:0 0 5px 5px"></div>
<div class="t" style="left:82.80px;top:604.30px;font-size:9.75px;font-weight:400;color:#2A7A4B;font-family:'Liberation Sans',sans-serif;letter-spacing:0.2px;">3 partitions</div>
<div class="a" style="left:433.3px;top:533.4px;width:242.30px;height:85.60px;border:1.2px solid #D3D6DD;border-radius:7px;background:#fff;overflow:hidden"></div>
<div class="a" style="left:434.5px;top:534.6px;width:239.90px;height:21.20px;background:#EFF0F3;border-radius:5px 5px 0 0"></div>
<svg class="a" style="left:440.6px;top:539.7px;" width="10" height="10" viewBox="0 0 10 10"><rect x="0.5" y="0.5" width="9" height="9" rx="1.3" stroke="#030615" stroke-width="1.1" fill="#fff"/><path d="M0.5 3.2 L9.5 3.2 M0.5 6.3 L9.5 6.3 M3.5 3.2 L3.5 9.5 M6.6 3.2 L6.6 9.5" stroke="#030615" stroke-width="1"/><path d="M1 1.1 L9 1.1" stroke="#030615" stroke-width="0.8"/></svg>
<div class="t" style="left:455.60px;top:540.17px;font-size:11.1px;font-weight:700;color:#030615;font-family:'Liberation Mono',monospace;letter-spacing:0px;">taxi_trips</div>
<div class="t" style="left:440.60px;top:562.20px;font-size:9.75px;font-weight:400;color:#687186;font-family:'Liberation Sans',sans-serif;letter-spacing:0.05px;">The raw taxi trips dataset, loaded into a DuckDB …</div>
<div class="a" style="left:440.5px;top:575.1px;width:74.40px;height:18.00px;background:#E5F6EA;border-radius:4px"></div>
<svg class="a" style="left:465.0px;top:580.1px;" width="9" height="9" viewBox="0 0 9 9"><circle cx="4.3" cy="4.3" r="4.2" fill="#2A7A4B"/><path d="M2.2 4.4 L3.8 5.9 L6.4 3" stroke="#fff" stroke-width="1.2" fill="none"/></svg>
<div class="t" style="left:478.00px;top:580.00px;font-size:9.75px;font-weight:400;color:#2A7A4B;font-family:'Liberation Sans',sans-serif;letter-spacing:0px;">All</div>
<div class="a" style="left:517.15px;top:575.1px;width:74.40px;height:18.00px;background:#EDEEF1;border-radius:4px"></div>
<svg class="a" style="left:545.15px;top:579.9px;" width="10" height="10" viewBox="0 0 10 10"><circle cx="4.5" cy="4.5" r="3.7" stroke="#4B5263" stroke-width="1.1" fill="none" stroke-dasharray="3 1.5"/><path d="M1 1 L8.2 8.2" stroke="#4B5263" stroke-width="1.1"/></svg>
<div class="t" style="left:558.05px;top:580.00px;font-size:9.75px;font-weight:400;color:#4B5263;font-family:'Liberation Sans',sans-serif;letter-spacing:0px;">0</div>
<div class="a" style="left:593.8px;top:575.1px;width:74.40px;height:18.00px;background:#EDEEF1;border-radius:4px"></div>
<svg class="a" style="left:621.4px;top:579.9px;" width="9" height="9" viewBox="0 0 9 9"><circle cx="4.3" cy="4.3" r="4.2" fill="#2B3142"/><rect x="3.8" y="2" width="1.1" height="3.2" fill="#fff"/><rect x="3.8" y="5.9" width="1.1" height="1.1" fill="#fff"/></svg>
<div class="t" style="left:634.90px;top:580.00px;font-size:9.75px;font-weight:400;color:#4B5263;font-family:'Liberation Sans',sans-serif;letter-spacing:0px;">0</div>
<div class="a" style="left:434.5px;top:598.4px;width:239.90px;height:19.40px;background:#E7F6EC;border-radius:0 0 5px 5px"></div>
<div class="t" style="left:441.90px;top:603.60px;font-size:9.75px;font-weight:400;color:#2A7A4B;font-family:'Liberation Sans',sans-serif;letter-spacing:0.2px;">3 partitions</div>
<div class="a" style="left:256px;top:339.6px;width:62.20px;height:19.10px;background:#EEF0F3;border-radius:8px"></div>
<svg class="a" style="left:263.5px;top:343.75px;" width="11" height="11" viewBox="0 0 11 11"><path d="M5.2 0.6 C2.6 0.6 2.8 1.8 2.8 1.8 L2.8 3 L5.3 3 L5.3 3.5 L1.8 3.5 C1.8 3.5 0.2 3.3 0.2 5.8 C0.2 8.3 1.6 8.2 1.6 8.2 L2.5 8.2 L2.5 7 C2.5 7 2.4 5.6 3.9 5.6 L6.3 5.6 C6.3 5.6 7.7 5.6 7.7 4.3 L7.7 2 C7.7 2 7.9 0.6 5.2 0.6 Z" fill="#1F86E6"/><path d="M5.4 10.9 C8 10.9 7.8 9.7 7.8 9.7 L7.8 8.5 L5.3 8.5 L5.3 8 L8.8 8 C8.8 8 10.4 8.2 10.4 5.7 C10.4 3.2 9 3.3 9 3.3 L8.1 3.3 L8.1 4.5 C8.1 4.5 8.2 5.9 6.7 5.9 L4.3 5.9 C4.3 5.9 2.9 5.9 2.9 7.2 L2.9 9.5 C2.9 9.5 2.7 10.9 5.4 10.9 Z" fill="#EBA63C"/></svg>
<div class="t" style="left:278.70px;top:345.20px;font-size:9.75px;font-weight:700;color:#030615;font-family:'Liberation Sans',sans-serif;letter-spacing:0.15px;">Python</div>
<div class="a" style="left:252.2px;top:626.4px;width:66.30px;height:18.90px;background:#EEF0F3;border-radius:8px"></div>
<svg class="a" style="left:259.7px;top:630.45px;" width="11" height="11" viewBox="0 0 11 11"><circle cx="5.3" cy="5.3" r="5.2" fill="#FBB331"/><circle cx="4.3" cy="5.3" r="2.2" fill="#fff"/><rect x="7" y="4.4" width="2.2" height="1.8" rx="0.5" fill="#fff"/></svg>
<div class="t" style="left:274.90px;top:631.80px;font-size:9.75px;font-weight:700;color:#030615;font-family:'Liberation Sans',sans-serif;letter-spacing:0.15px;">DuckDB</div>
<div class="a" style="left:609.8px;top:339.6px;width:65.70px;height:19.10px;background:#EEF0F3;border-radius:8px"></div>
<svg class="a" style="left:617.3px;top:343.75px;" width="11" height="11" viewBox="0 0 11 11"><circle cx="5.3" cy="5.3" r="5.2" fill="#FBB331"/><circle cx="4.3" cy="5.3" r="2.2" fill="#fff"/><rect x="7" y="4.4" width="2.2" height="1.8" rx="0.5" fill="#fff"/></svg>
<div class="t" style="left:632.50px;top:345.20px;font-size:9.75px;font-weight:700;color:#030615;font-family:'Liberation Sans',sans-serif;letter-spacing:0.15px;">DuckDB</div>
<div class="a" style="left:609.5px;top:626.4px;width:66.30px;height:18.90px;background:#EEF0F3;border-radius:8px"></div>
<svg class="a" style="left:617.0px;top:630.45px;" width="11" height="11" viewBox="0 0 11 11"><circle cx="5.3" cy="5.3" r="5.2" fill="#FBB331"/><circle cx="4.3" cy="5.3" r="2.2" fill="#fff"/><rect x="7" y="4.4" width="2.2" height="1.8" rx="0.5" fill="#fff"/></svg>
<div class="t" style="left:632.20px;top:631.80px;font-size:9.75px;font-weight:700;color:#030615;font-family:'Liberation Sans',sans-serif;letter-spacing:0.15px;">DuckDB</div>
<div class="a" style="left:846.2px;top:435.3px;width:39.50px;height:254.70px;border:1.2px solid #CDD2DB;border-radius:8px;background:#fff"></div>
<div class="a" style="left:846.2px;top:473.6px;width:39.50px;height:1.20px;background:#CDD2DB"></div>
<div class="a" style="left:846.2px;top:649.7px;width:39.50px;height:1.20px;background:#CDD2DB"></div>
<div class="a" style="left:859.9px;top:489.6px;width:10.10px;height:145.30px;background:#C5CAD3;border-radius:5px"></div>
<svg class="a" style="left:852.8px;top:555.2px;" width="23" height="23" viewBox="0 0 23 23"><circle cx="11.5" cy="11.5" r="10.2" fill="#EEF0F3" stroke="#5E6A7E" stroke-width="2"/></svg>
<svg class="a" style="left:858px;top:447.3px;" width="16" height="16" viewBox="0 0 16 16"><circle cx="6.5" cy="6.5" r="5" stroke="#030615" stroke-width="1.8" fill="none"/><path d="M10.2 10.2 L14.5 14.5" stroke="#030615" stroke-width="1.8"/><path d="M6.5 4 L6.5 9 M4 6.5 L9 6.5" stroke="#030615" stroke-width="1.6"/></svg>
<svg class="a" style="left:858px;top:662.3px;" width="16" height="16" viewBox="0 0 16 16"><circle cx="6.5" cy="6.5" r="5" stroke="#030615" stroke-width="1.8" fill="none"/><path d="M10.2 10.2 L14.5 14.5" stroke="#030615" stroke-width="1.8"/><path d="M4 6.5 L9 6.5" stroke="#030615" stroke-width="1.6"/></svg>
<div class="a" style="left:846.2px;top:700.5px;width:39.50px;height:38.90px;border:1.2px solid #CDD2DB;border-radius:8px;background:#fff"></div>
<div class="a" style="left:846.2px;top:750.3px;width:39.50px;height:39.30px;border:1.2px solid #CDD2DB;border-radius:8px;background:#fff"></div>
<div class="a" style="left:846.2px;top:800.1px;width:39.50px;height:39.70px;border:1.2px solid #CDD2DB;border-radius:8px;background:#fff"></div>
<svg class="a" style="left:861.8px;top:713.5px;" width="9" height="14" viewBox="0 0 9 14"><path d="M1 1.2 L4.2 4.4 L7.4 1.2 M1 11.8 L4.2 8.6 L7.4 11.8" stroke="#030615" stroke-width="1.7" fill="none"/></svg>
<svg class="a" style="left:857px;top:761.8px;" width="18" height="18" viewBox="0 0 18 18"><rect x="1" y="1.5" width="4.5" height="4.5" stroke="#030615" stroke-width="1.5" fill="none"/><rect x="11.5" y="1.5" width="4.5" height="4.5" stroke="#030615" stroke-width="1.5" fill="none"/><rect x="11.5" y="10.5" width="4.5" height="4.5" stroke="#030615" stroke-width="1.5" fill="none"/><path d="M5.5 3.7 L11.5 3.7 M8.5 3.7 L8.5 12.7 L11.5 12.7" stroke="#030615" stroke-width="1.5" fill="none"/></svg>
<svg class="a" style="left:856.5px;top:811px;" width="18" height="18" viewBox="0 0 18 18"><circle cx="9" cy="9" r="7.8" stroke="#030615" stroke-width="1.6" fill="none"/><path d="M9 3.8 L9 9.8 M6.2 7.2 L9 10 L11.8 7.2 M5 12.5 L13 12.5" stroke="#030615" stroke-width="1.6" fill="none"/></svg>
</div>
<div class="a" style="left:1276.7px;top:145px;width:501.30px;height:926.00px;background:#fff"></div>
<div class="a" style="left:1274.5px;top:145px;width:2.20px;height:926.00px;background:#E3E5EA"></div>
<div class="t" style="left:1306.80px;top:169.95px;font-size:19.8px;font-weight:700;color:#030615;font-family:'Liberation Mono',monospace;letter-spacing:0.15px;">taxi_trips_file</div>
<div class="t" style="left:1307.00px;top:199.42px;font-size:17.5px;font-weight:400;color:#312E96;font-family:'Liberation Sans',sans-serif;letter-spacing:0.4px;">View in Asset Catalog</div>
<svg class="a" style="left:1485px;top:195px;" width="30" height="25" viewBox="0 0 30 25"><path d="M8.6 5.6 L10 5.6 M8.6 5.6 Q7.6 5.6 7.6 6.8 L7.6 17.6 Q7.6 18.6 8.8 18.6 L19.2 18.6 Q20.3 18.6 20.3 17.4 L20.3 14" stroke="#312E96" stroke-width="1.7" fill="none" stroke-linecap="round"/><path d="M11.8 5.6 L11.2 5.6 M15.4 5.6 L20.3 5.6 L20.3 10.5 M20 5.9 L13.8 12.2" stroke="#312E96" stroke-width="1.7" fill="none" stroke-linecap="round" stroke-linejoin="round"/></svg>
<div class="a" style="left:1276.7px;top:238.5px;width:501.30px;height:39.30px;background:#F7F8FA;border-top:1px solid #E3E5EA;border-bottom:1px solid #E3E5EA"></div>
<div class="t" style="left:1307.40px;top:251.05px;font-size:15px;font-weight:700;color:#030615;font-family:'Liberation Sans',sans-serif;letter-spacing:0.17px;">Description</div>
<svg class="a" style="left:1745.8px;top:255.24999999999997px;" width="14" height="8" viewBox="0 0 14 8"><path d="M0.2 0.2 L13.4 0.2 L6.8 6.9 Z" fill="#030615"/></svg>
<div class="t" style="left:1307.20px;top:300.35px;font-size:16.85px;font-weight:400;color:#1E2230;font-family:'Liberation Sans',sans-serif;letter-spacing:0.05px;">The raw parquet files for the taxi trips dataset. Sourced</div>
<div class="t" style="left:1307.20px;top:320.95px;font-size:16.85px;font-weight:400;color:#1E2230;font-family:'Liberation Sans',sans-serif;letter-spacing:-0.25px;">from the NYC Open Data portal.</div>
<div class="a" style="left:1276.7px;top:359.3px;width:501.30px;height:39.40px;background:#F7F8FA;border-top:1px solid #E3E5EA;border-bottom:1px solid #E3E5EA"></div>
<div class="t" style="left:1307.40px;top:371.95px;font-size:15px;font-weight:700;color:#030615;font-family:'Liberation Sans',sans-serif;letter-spacing:0.5px;">Metadata plots</div>
<svg class="a" style="left:1745.8px;top:376.1px;" width="14" height="8" viewBox="0 0 14 8"><path d="M0.2 0.2 L13.4 0.2 L6.8 6.9 Z" fill="#030615"/></svg>
<div class="t" style="left:1307.20px;top:410.85px;font-size:15px;font-weight:700;color:#030615;font-family:'Liberation Sans',sans-serif;letter-spacing:0.15px;">Number of records</div>
<svg class="a" style="left:0px;top:0px;" width="1778" height="1071" viewBox="0 0 1778 1071"><path d="M1389 457.6 L1724.5 457.6" stroke="#E2E2E2" stroke-width="1"/><path d="M1389 496.5 L1724.5 496.5" stroke="#E2E2E2" stroke-width="1"/><path d="M1389 535.3 L1724.5 535.3" stroke="#E2E2E2" stroke-width="1"/><path d="M1399.6 457.6 L1399.6 545.5" stroke="#E2E2E2" stroke-width="1"/><path d="M1562 457.6 L1562 545.5" stroke="#E2E2E2" stroke-width="1"/><path d="M1724.3 457.6 L1724.3 545.5" stroke="#E2E2E2" stroke-width="1"/><path d="M1399.6 509.5 L1562 524.2 L1724.3 476.6" stroke="#4F43DD" stroke-width="3" fill="none" stroke-linejoin="round"/><circle cx="1399.6" cy="509.5" r="2.6" fill="#fff" stroke="#4F43DD" stroke-width="2"/><circle cx="1562" cy="524.2" r="2.6" fill="#fff" stroke="#4F43DD" stroke-width="2"/><circle cx="1724.3" cy="476.6" r="2.6" fill="#fff" stroke="#4F43DD" stroke-width="2"/></svg>
<div class="t" style="left:1319.00px;top:451.56px;font-size:14px;font-weight:400;color:#667189;font-family:'Liberation Sans',sans-serif;letter-spacing:0.38px;width:66px;text-align:right">3,600,000</div>
<div class="t" style="left:1319.00px;top:528.96px;font-size:14px;font-weight:400;color:#667189;font-family:'Liberation Sans',sans-serif;letter-spacing:0.38px;width:66px;text-align:right">2,800,000</div>
<div class="t" style="left:1319.00px;top:490.16px;font-size:14px;font-weight:400;color:#667189;font-family:'Liberation Sans',sans-serif;letter-spacing:0.38px;width:66px;text-align:right">3,200,000</div>
<div class="t" style="left:1293.50px;top:514.16px;font-size:14px;font-weight:400;color:#667189;font-family:'Liberation Sans',sans-serif;letter-spacing:0.3px;transform:rotate(-90deg);transform-origin:0 0">Value</div>
<div class="t" style="left:1360.20px;top:551.46px;font-size:14px;font-weight:400;color:#555555;font-family:'Liberation Sans',sans-serif;letter-spacing:0.45px;">2023-01-01</div>
<div class="t" style="left:1523.80px;top:551.46px;font-size:14px;font-weight:400;color:#555555;font-family:'Liberation Sans',sans-serif;letter-spacing:0.45px;">2023-02-01</div>
<div class="t" style="left:1686.10px;top:551.46px;font-size:14px;font-weight:400;color:#555555;font-family:'Liberation Sans',sans-serif;letter-spacing:0.45px;">2023-03-01</div>
<div class="t" style="left:1535.00px;top:578.66px;font-size:14px;font-weight:400;color:#667189;font-family:'Liberation Sans',sans-serif;letter-spacing:0.35px;">Partition</div>
<div class="t" style="left:1307.20px;top:631.90px;font-size:17.9px;font-weight:400;color:#3C4253;font-family:'Liberation Sans',sans-serif;letter-spacing:0.13px;">When graphing values by partition, the highest data</div>
<div class="t" style="left:1307.20px;top:653.90px;font-size:17.9px;font-weight:400;color:#3C4253;font-family:'Liberation Sans',sans-serif;letter-spacing:0.13px;">point for each materialized event label is displayed.</div>
<div class="a" style="left:1276.7px;top:694.7px;width:501.30px;height:40.80px;background:#F7F8FA;border-top:2px solid #C9CED7;border-bottom:1px solid #E3E5EA"></div>
<div class="t" style="left:1307.40px;top:707.75px;font-size:15px;font-weight:700;color:#030615;font-family:'Liberation Sans',sans-serif;letter-spacing:0.3px;">Config</div>
<svg class="a" style="left:1745.8px;top:712.2px;" width="14" height="8" viewBox="0 0 14 8"><path d="M0.2 0.2 L13.4 0.2 L6.8 6.9 Z" fill="#030615"/></svg>
<div class="t" style="left:1307.00px;top:759.15px;font-size:15.5px;font-weight:400;color:#7D879C;font-family:'Liberation Sans',sans-serif;letter-spacing:0.3px;">Any</div>
<div class="a" style="left:1276.7px;top:798.1px;width:501.30px;height:38.80px;background:#F7F8FA;border-top:1px solid #E3E5EA;border-bottom:1px solid #E3E5EA"></div>
<div class="t" style="left:1307.40px;top:809.15px;font-size:15px;font-weight:700;color:#030615;font-family:'Liberation Sans',sans-serif;letter-spacing:0.3px;">Type</div>
<svg class="a" style="left:1745.8px;top:814.6px;" width="14" height="8" viewBox="0 0 14 8"><path d="M0.2 0.2 L13.4 0.2 L6.8 6.9 Z" fill="#030615"/></svg>
<div class="t" style="left:1307.00px;top:858.99px;font-size:21px;font-weight:400;color:#030615;font-family:'Liberation Sans',sans-serif;letter-spacing:-0.1px;">Any</div>
<div class="a" style="left:1276.7px;top:904.2px;width:501.30px;height:39.10px;background:#F7F8FA;border-top:1px solid #E3E5EA;border-bottom:1px solid #E3E5EA"></div>
<div class="t" style="left:1307.40px;top:915.55px;font-size:15px;font-weight:700;color:#030615;font-family:'Liberation Sans',sans-serif;letter-spacing:0.3px;">Partitions</div>
<svg class="a" style="left:1745.8px;top:920.85px;" width="14" height="8" viewBox="0 0 14 8"><path d="M0.2 0.2 L13.4 0.2 L6.8 6.9 Z" fill="#030615"/></svg>
<div class="t" style="left:1306.50px;top:967.53px;font-size:17.5px;font-weight:400;color:#030615;font-family:'Liberation Sans',sans-serif;letter-spacing:0.41px;">Monthly, starting 2023-01-01 UTC.</div>
<div class="t" style="left:1307.50px;top:1021.20px;font-size:15.8px;font-weight:700;color:#030615;font-family:'Liberation Sans',sans-serif;letter-spacing:0px;">Materialized</div>
<div class="t" style="left:1723.50px;top:1021.20px;font-size:15.8px;font-weight:700;color:#030615;font-family:'Liberation Sans',sans-serif;letter-spacing:1.6px;">3/3</div>
<div class="a" style="left:1307px;top:1043.3px;width:440.80px;height:14.90px;background:#32C77F;border-radius:6px"></div>
<div class="t" style="left:1307.00px;top:1064.83px;font-size:17.5px;font-weight:400;color:#5E687D;font-family:'Liberation Sans',sans-serif;letter-spacing:0.0px;">2023-01-01</div>
<div class="t" style="left:1657.00px;top:1064.83px;font-size:17.5px;font-weight:400;color:#5E687D;font-family:'Liberation Sans',sans-serif;letter-spacing:0.3px;">2023-03-01</div>
<div class="a" style="left:0px;top:80px;width:1.00px;height:991.00px;background:#E3E5EA"></div>
</div></body></html>
